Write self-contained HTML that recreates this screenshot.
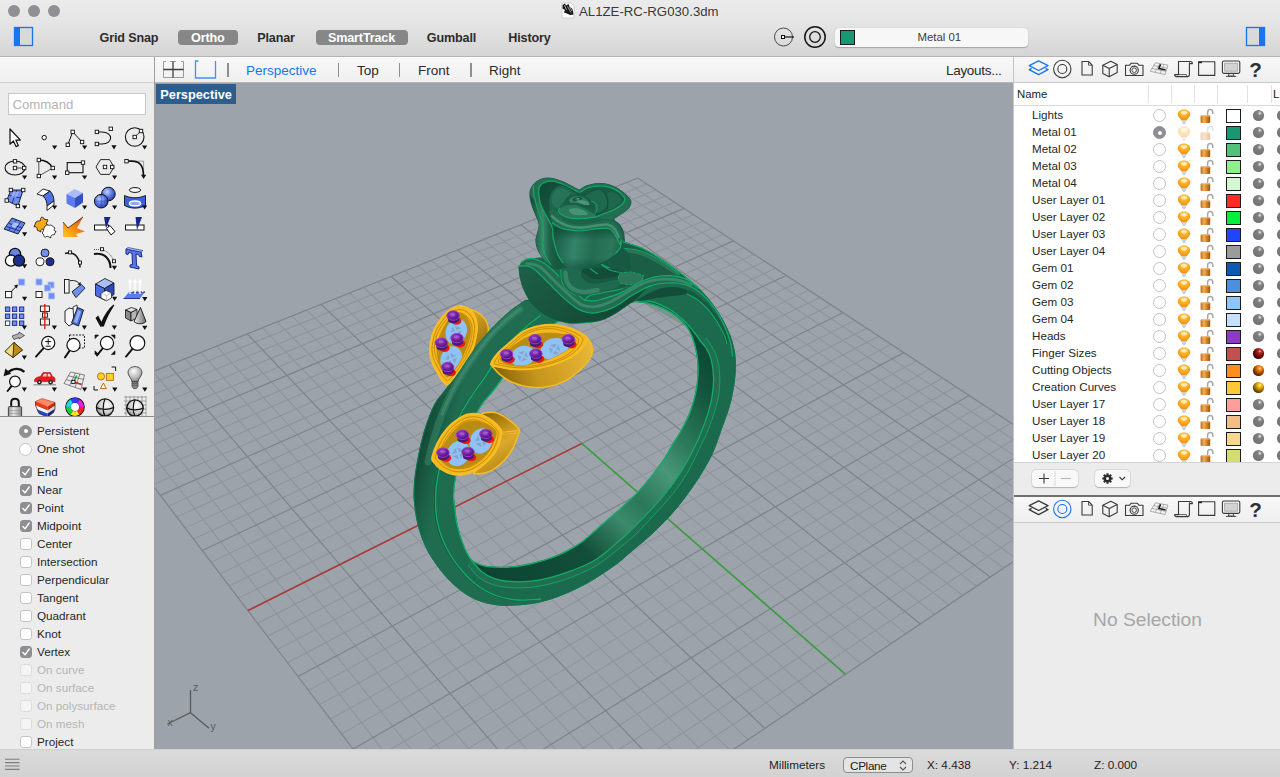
<!DOCTYPE html>
<html><head><meta charset="utf-8"><title>AL1ZE-RC-RG030.3dm</title>
<style>
*{box-sizing:border-box}
html,body{margin:0;padding:0}
body{width:1280px;height:777px;position:relative;overflow:hidden;background:#ececec;font-family:"Liberation Sans",sans-serif;color:#222;-webkit-font-smoothing:antialiased}
.abs{position:absolute}
#titlebar{position:absolute;left:0;top:0;width:1280px;height:57px;background:linear-gradient(#ebebeb 0,#e6e6e6 20px,#d5d5d5 56px);border-bottom:1px solid #b4b4b4}
.tl{position:absolute;top:5px;width:12px;height:12px;border-radius:50%;background:#8f8f94}
#title{position:absolute;left:579px;top:3.8px;font-size:13.2px;color:#3a3a3a;white-space:nowrap;letter-spacing:0.02px}
.tb{position:absolute;top:29.5px;height:16px;line-height:16px;font-size:12.6px;letter-spacing:-0.15px;font-weight:bold;color:#2c2c2c;white-space:nowrap;text-align:center}
.tb.on{background:#878787;color:#fff;border-radius:4px;top:29.5px;height:15.5px;line-height:16px}
#layerbox{position:absolute;left:835px;top:28px;width:193px;height:18.5px;background:#f7f7f7;border-radius:4px;box-shadow:0 0.5px 1px rgba(0,0,0,.25)}
#layerbox .sw{position:absolute;left:5px;top:2px;width:14.5px;height:14.5px;background:#199770;border:1px solid #1a1a1a}
#layerbox .tx{position:absolute;left:0;width:208.5px;top:3px;text-align:center;font-size:11.4px;color:#3c3c3c}
#left{position:absolute;left:0;top:57px;width:154px;height:692px;background:#ececec}
#lefttop{position:absolute;left:0;top:0;width:154px;height:26px;background:linear-gradient(#f8f8f8,#f0f0f0);border-bottom:1px solid #d0d0d0}
#cmd{position:absolute;left:8px;top:36px;width:138px;height:22px;background:#fff;border:1px solid #c6c6c6;font-size:13.2px;color:#b4b4b4;line-height:21px;padding-left:3.5px}
#vsep{position:absolute;left:154px;top:57px;width:1.5px;height:692px;background:#9e9e9e}
#tabs{position:absolute;left:155px;top:57px;width:858px;height:26px;background:linear-gradient(#f9f9f9,#efefef);border-bottom:1px solid #b8b8b8;font-size:13.5px}
#tabs span{position:absolute;top:6px;white-space:nowrap;color:#2a2a2a}
#tabs i{position:absolute;top:6px;width:1.5px;height:14px;background:#8e8e8e}
#vp{position:absolute;left:155px;top:83px;width:858px;height:666px;background:#9da3aa;overflow:hidden}
#vplabel{position:absolute;left:1px;top:1px;width:80px;height:20px;background:#2c5d8f;color:#fff;font-weight:bold;font-size:12.75px;line-height:21.4px;padding-left:4.3px}
#right{position:absolute;left:1013px;top:57px;width:267px;height:692px;background:#ececec;border-left:1px solid #c4c4c4}
.iconrow{position:absolute;left:0;width:267px;height:26px;background:linear-gradient(#f8f8f8,#eeeeee);border-bottom:1px solid #c9c9c9}
#lhead{position:absolute;left:0;top:26px;width:267px;height:23px;background:#fff;border-bottom:1px solid #d9d9d9;font-size:11.4px}
#lhead b{position:absolute;top:2px;width:1px;height:18px;background:#e1e1e1}
#llist{position:absolute;left:0;top:49px;width:267px;height:356px;background:#fff;overflow:hidden}
.lr{position:absolute;left:0;width:267px;height:17px;font-size:11.65px;line-height:17px;color:#262626}
.lr .nm{position:absolute;left:18px;top:-1px;white-space:nowrap}
.lr .rd{position:absolute;left:139px;top:2px;width:13px;height:13px;border-radius:50%;border:1px solid #c2c2c2;background:#fff}
.lr .rd.on{background:#8e8e93;border-color:#8e8e93}
.lr .rd.on:after{content:"";position:absolute;left:3.5px;top:3.5px;width:4px;height:4px;border-radius:50%;background:#fff}
.lr .sw{position:absolute;left:212px;top:1.5px;width:14.5px;height:14.5px;border:1.5px solid #1c1c1c}
#lfoot{position:absolute;left:0;top:405px;width:267px;height:33px;background:#ececec;border-top:1px solid #d4d4d4}
.btn{position:absolute;top:7px;height:17px;background:#f8f8f8;border-radius:4px;box-shadow:0 0 0 0.5px rgba(0,0,0,.12),0 0.5px 1px rgba(0,0,0,.2)}
#rdiv{position:absolute;left:0;top:438.2px;width:267px;height:1.6px;background:#707070}
#nosel{position:absolute;left:0;top:552px;width:267px;text-align:center;font-size:19.2px;color:#a6a6a6}
#status{position:absolute;left:0;top:749px;width:1280px;height:28px;background:linear-gradient(#dadada,#d2d2d2);border-top:1px solid #d0d0d0;font-size:11.75px;color:#222}
#status span{position:absolute;top:7.5px;white-space:nowrap}
#cplane{position:absolute;left:843px;top:6.5px;width:69.5px;height:16.5px;border:1px solid #8d8d8d;border-radius:4px;background:#e4e4e4}
.os{position:absolute;left:0;width:154px;height:18px;font-size:11.7px;line-height:18px;color:#262626}
.os .t{position:absolute;left:37px;top:0;white-space:nowrap}
.os.dis .t{color:#b5b5b5}
.os .cb{position:absolute;left:20px;top:3px;width:12px;height:12px;border-radius:3px;background:#fff;border:1px solid #c4c4c4}
.os.dis .cb{border-color:#dcdcdc;background:#f4f4f4}
.os .cb.on{background:#8e8e93;border-color:#8e8e93}
.os .rb{position:absolute;left:19px;top:2.5px;width:13px;height:13px;border-radius:50%;background:#fff;border:1px solid #c4c4c4}
.os .rb.on{background:#8e8e93;border-color:#8e8e93}
.os .rb.on:after{content:"";position:absolute;left:3.5px;top:3.5px;width:4px;height:4px;border-radius:50%;background:#fff}
#pdiv{position:absolute;left:0;top:359px;width:154px;height:1px;background:#8c8c8c}

</style></head><body>
<svg width="0" height="0" style="position:absolute"><defs>
<radialGradient id="ball0" cx="0.62" cy="0.3" r="0.75"><stop offset="0" stop-color="#ffffff"/><stop offset="0.12" stop-color="#b5b5b5"/><stop offset="0.3" stop-color="#7f7f7f"/><stop offset="1" stop-color="#707070"/></radialGradient>
<radialGradient id="ball1" cx="0.62" cy="0.3" r="0.75"><stop offset="0" stop-color="#ffd0c8"/><stop offset="0.15" stop-color="#c03a30"/><stop offset="0.5" stop-color="#7a0d0a"/><stop offset="1" stop-color="#2a0000"/></radialGradient>
<radialGradient id="ball2" cx="0.62" cy="0.3" r="0.75"><stop offset="0" stop-color="#fff0d0"/><stop offset="0.15" stop-color="#ff9a28"/><stop offset="0.55" stop-color="#b04c00"/><stop offset="1" stop-color="#3a1400"/></radialGradient>
<radialGradient id="ball3" cx="0.62" cy="0.3" r="0.75"><stop offset="0" stop-color="#fff8d8"/><stop offset="0.15" stop-color="#ffd028"/><stop offset="0.55" stop-color="#b07c00"/><stop offset="1" stop-color="#3a2600"/></radialGradient>
<radialGradient id="gBulb" cx="0.5" cy="0.3" r="0.7"><stop offset="0" stop-color="#ffe9a0"/><stop offset="0.35" stop-color="#ffb52e"/><stop offset="1" stop-color="#f08a0a"/></radialGradient>
<linearGradient id="gLock" x1="0" y1="0" x2="1" y2="0"><stop offset="0" stop-color="#b86a14"/><stop offset="0.35" stop-color="#f0b060"/><stop offset="0.6" stop-color="#d8892a"/><stop offset="1" stop-color="#9a5408"/></linearGradient>
<g id="bulb"><path d="M10 2.6C6.2 2.6 3.8 5 3.8 7.6C3.8 10.2 6.6 11.4 7.4 13.6H12.6C13.4 11.4 16.2 10.2 16.2 7.6C16.2 5 13.8 2.6 10 2.6Z" fill="url(#gBulb)"/><ellipse cx="10" cy="5.6" rx="3.4" ry="1.8" fill="#fff3c4" opacity="0.75"/><path d="M7.6 13.6H12.4L11.6 16.2H8.4Z" fill="#c4d4e8"/><path d="M8.6 16.2H11.4L10 17Z" fill="#8fa6c4"/></g>
<g id="lock"><path d="M11.6 8.2V5.4C11.6 3.4 13 2.6 14.3 2.6C15.6 2.6 16.8 3.5 16.8 5.4V7" fill="none" stroke="#a9a9a9" stroke-width="1.5"/><rect x="4.6" y="8.4" width="9.6" height="7.6" rx="1" fill="url(#gLock)"/><rect x="4.6" y="8.4" width="9.6" height="1.4" rx="0.7" fill="#e9a850" opacity="0.8"/></g>
<g id="docicon"><path d="M2 1H11L14 4V16H2Z" fill="#fbfbfb" stroke="#bdbdbd" stroke-width="0.6"/><path d="M2.5 3L5 1.5L6 3.5L8.5 2L9.5 4.5L12.5 7L13.5 12.5L10 13L7 11.5L4 10.5L5 8L2.5 6.5Z" fill="#161616"/><path d="M4.5 3L6.5 8M7.5 4.5L11 10.5M9.5 4.5L12 9" stroke="#fff" stroke-width="0.6"/></g>
<g id="gear"><path d="M16.02 7.36L17.69 7.43L17.69 9.57L16.02 9.64L15.80 10.18L16.93 11.41L15.41 12.93L14.18 11.80L13.64 12.02L13.57 13.69L11.43 13.69L11.36 12.02L10.82 11.80L9.59 12.93L8.07 11.41L9.20 10.18L8.98 9.64L7.31 9.57L7.31 7.43L8.98 7.36L9.20 6.82L8.07 5.59L9.59 4.07L10.82 5.20L11.36 4.98L11.43 3.31L13.57 3.31L13.64 4.98L14.18 5.20L15.41 4.07L16.93 5.59L15.80 6.82Z" fill="#2b2b2b"/><circle cx="12.5" cy="8.5" r="1.5" fill="#f8f8f8"/></g>
<g id="pi_layers" fill="none" stroke-width="1.3" stroke-linejoin="round"><path d="M24.6 3.9L34 8.7L24.6 13.5L15.2 8.7Z"/><path d="M17.6 11.4L15.2 12.6L24.6 17.6L34 12.6L31.6 11.4"/></g>
<g id="pi_circ" fill="none"><circle cx="48.3" cy="12" r="8.7" stroke-width="1.1"/><circle cx="48.3" cy="12" r="4.5" stroke-width="1.1"/></g>
<g id="picons" fill="none" stroke="#3a3a3a" stroke-width="1.1" stroke-linejoin="round">
<path d="M68 4.5H74.5L78.2 8.2V18H68Z"/><path d="M74.5 4.5V8.2H78.2" stroke-width="0.8"/>
<path d="M88.8 8.2L96.8 4.2L103.2 7.4V15.6L95.2 19.8L88.8 16.4Z"/><path d="M88.8 8.2L95.2 11.4L103.2 7.4M95.2 11.4V19.8"/>
<path d="M111.5 8.3H115.5L117 6.3H123.5L125 8.3H129V18.5H111.5Z"/><circle cx="120.2" cy="13.2" r="4.1"/><circle cx="120.2" cy="13.2" r="2.3" stroke-width="0.9"/>
<g stroke="#9a9a9a" stroke-width="0.8"><path d="M141.5 5.8L136.2 14.2M145.8 6.6L141 15.2M150 7.4L146 16.4M154 8.2L151 17.6M141.5 5.8L154 8.2M139.6 8.6L153 11.2M137.8 11.4L152 14.4M136.2 14.2L151 17.6"/></g>
<path d="M146.6 7.2L144.8 11.6L151.6 12.9" stroke="#1a1a1a" stroke-width="1.5"/>
<path d="M164.5 4.5H176.5C178 4.5 178.4 5.6 178.4 6.6H175.4V17.6C175.4 19 174.4 19.6 173.4 19.6H162.2C161 19.6 160.6 18.6 160.6 17.6H164.5Z"/><path d="M164.5 17.6H172.4C172.4 18.6 172.6 19.2 173.4 19.6M175.4 6.6C175.4 5.6 175.6 5 176.5 4.5" stroke-width="0.8"/>
<path d="M184.6 4.8H200.8V18.4H184.6Z"/><path d="M184.6 5.4H188" stroke-width="1.6" stroke="#222"/>
<rect x="208.4" y="4" width="17.4" height="12.4" rx="1.6"/><rect x="210.6" y="6.2" width="13" height="8" fill="#d4d4d4" stroke="#8a8a8a" stroke-width="0.6"/><path d="M215 16.6L214.4 19H219.8L219.2 16.6M212 19.4H222.2" stroke-width="0.9"/>
<text x="235.2" y="19.6" font-family="Liberation Sans,sans-serif" font-weight="bold" font-size="20.5" fill="#2e2e2e" stroke="none">?</text>
</g>

</defs></svg>
<div id="titlebar">
<span class="tl" style="left:8px"></span><span class="tl" style="left:28px"></span><span class="tl" style="left:48px"></span>
<svg class="abs" style="left:560px;top:2px" width="16" height="17"><use href="#docicon"/></svg>
<span id="title">AL1ZE-RC-RG030.3dm</span>
<svg class="abs" style="left:13px;top:26px" width="22" height="22"><rect x="1.5" y="1.5" width="18" height="18" fill="#d9d9d9" stroke="#1a73f0" stroke-width="1.3"/><rect x="1" y="1" width="6" height="19" fill="#1a73f0"/></svg>
<span class="tb" style="left:99px;width:60px">Grid Snap</span>
<span class="tb on" style="left:178px;width:59.5px">Ortho</span>
<span class="tb" style="left:256px;width:40px">Planar</span>
<span class="tb on" style="left:315.5px;width:92px">SmartTrack</span>
<span class="tb" style="left:426px;width:51px">Gumball</span>
<span class="tb" style="left:506px;width:47px">History</span>
<svg class="abs" style="left:770px;top:24px" width="60" height="26"><circle cx="13.5" cy="13" r="9" fill="none" stroke="#3a3a3a" stroke-width="0.9"/><rect x="11.5" y="11.5" width="3" height="3" fill="#fff" stroke="#111" stroke-width="1"/><path d="M15 13H24" stroke="#111" stroke-width="1.2"/><circle cx="45" cy="13" r="10.2" fill="none" stroke="#161616" stroke-width="1.5"/><circle cx="45" cy="13" r="5.3" fill="none" stroke="#161616" stroke-width="1.3"/></svg>
<div id="layerbox"><span class="sw"></span><span class="tx">Metal 01</span></div>
<svg class="abs" style="left:1245px;top:26px" width="22" height="22"><rect x="1.5" y="1.5" width="18" height="18" fill="#d9d9d9" stroke="#1a73f0" stroke-width="1.3"/><rect x="14" y="1" width="6" height="19" fill="#1a73f0"/></svg>
</div>
<div id="left">
<div id="lefttop"></div>
<div id="cmd">Command</div>
<svg class="abs" style="left:0;top:63px" width="154" height="296" viewBox="0 120 154 296">
<g transform="translate(15,138)"><path d="M-5 -9V6.2L-1.6 3L1 8.6L3.3 7.6L0.8 2.1H5.4Z" fill="#fff" stroke="#111" stroke-width="1.2" stroke-linejoin="round"/></g>
<g transform="translate(45,138)"><circle cx="-0.8" cy="-0.4" r="2.2" fill="#fff" stroke="#111" stroke-width="1"/><path d="M7.0 7.4H12.2L9.6 11.6Z" fill="#111"/></g>
<g transform="translate(75,138)"><path d="M-7.2 6.8L-2.3 -6.1L7.1 4" fill="none" stroke="#111" stroke-width="1"/><rect x="-8.9" y="5.1" width="3.4" height="3.4" fill="#fff" stroke="#111" stroke-width="0.9"/><rect x="-4.0" y="-7.8" width="3.4" height="3.4" fill="#fff" stroke="#111" stroke-width="0.9"/><rect x="5.4" y="2.3" width="3.4" height="3.4" fill="#fff" stroke="#111" stroke-width="0.9"/><path d="M7.0 7.4H12.2L9.6 11.6Z" fill="#111"/></g>
<g transform="translate(105,138)"><path d="M-8 -6H-3C8.5 -6 8.5 6 -3 6H-8" fill="none" stroke="#111" stroke-width="1.1"/><rect x="-9.8" y="-7.8" width="3.4" height="3.4" fill="#fff" stroke="#111" stroke-width="0.9"/><rect x="4.1" y="-10.9" width="3.4" height="3.4" fill="#fff" stroke="#111" stroke-width="0.9"/><rect x="-9.8" y="4.3" width="3.4" height="3.4" fill="#fff" stroke="#111" stroke-width="0.9"/><path d="M6.4 7.2H11.6L9.0 11.4Z" fill="#111"/></g>
<g transform="translate(135,138)"><circle cx="-0.3" cy="-1" r="9.3" fill="none" stroke="#111" stroke-width="1.1"/><path d="M-0.3 -1L6 -7" stroke="#111" stroke-width="0.8"/><rect x="-2.0" y="-2.7" width="3.4" height="3.4" fill="#fff" stroke="#111" stroke-width="0.9"/><rect x="4.3" y="-8.7" width="3.4" height="3.4" fill="#fff" stroke="#111" stroke-width="0.9"/><path d="M7.0 7.4H12.2L9.6 11.6Z" fill="#111"/></g>
<g transform="translate(15,168)"><ellipse cx="0" cy="0" rx="10" ry="7" fill="none" stroke="#111" stroke-width="1.1"/><path d="M0 0H9" stroke="#111" stroke-width="0.8"/><rect x="-1.7" y="-8.4" width="3.4" height="3.4" fill="#fff" stroke="#111" stroke-width="0.9"/><rect x="-1.7" y="-1.7" width="3.4" height="3.4" fill="#fff" stroke="#111" stroke-width="0.9"/><rect x="7.5" y="-1.7" width="3.4" height="3.4" fill="#fff" stroke="#111" stroke-width="0.9"/><path d="M7.0 7.4H12.2L9.6 11.6Z" fill="#111"/></g>
<g transform="translate(45,168)"><path d="M-6.2 -8V8L7.7 0" fill="none" stroke="#111" stroke-width="0.7"/><path d="M-6.2 -8C0 -8 5 -5 7.7 0" fill="none" stroke="#111" stroke-width="1.3"/><rect x="-7.9" y="-9.7" width="3.4" height="3.4" fill="#fff" stroke="#111" stroke-width="0.9"/><rect x="6.0" y="-1.7" width="3.4" height="3.4" fill="#fff" stroke="#111" stroke-width="0.9"/><rect x="-7.9" y="6.3" width="3.4" height="3.4" fill="#fff" stroke="#111" stroke-width="0.9"/><path d="M7.0 7.4H12.2L9.6 11.6Z" fill="#111"/></g>
<g transform="translate(75,168)"><rect x="-7.8" y="-5.4" width="15.8" height="10.1" fill="none" stroke="#111" stroke-width="1.1"/><rect x="-9.5" y="3.0" width="3.4" height="3.4" fill="#fff" stroke="#111" stroke-width="0.9"/><rect x="6.3" y="-7.1" width="3.4" height="3.4" fill="#fff" stroke="#111" stroke-width="0.9"/><path d="M7.0 7.4H12.2L9.6 11.6Z" fill="#111"/></g>
<g transform="translate(105,168)"><path d="M-9 -1L-4.5 -8.4H4.5L9 -1L4.5 6.4H-4.5Z" fill="none" stroke="#111" stroke-width="0.9"/><rect x="-1.7" y="-2.7" width="3.4" height="3.4" fill="#fff" stroke="#111" stroke-width="0.9"/><rect x="5.5" y="-2.7" width="3.4" height="3.4" fill="#fff" stroke="#111" stroke-width="0.9"/><path d="M7.0 7.4H12.2L9.6 11.6Z" fill="#111"/></g>
<g transform="translate(135,168)"><path d="M0 -6.8H8.6V1" fill="none" stroke="#666" stroke-width="0.6"/><path d="M-8.5 -6.8H-3C5 -6.8 8.4 -2 8.4 7" fill="none" stroke="#111" stroke-width="1.7"/><rect x="-10.2" y="-8.5" width="3.4" height="3.4" fill="#fff" stroke="#111" stroke-width="0.9"/><path d="M6.0 6.8H11.2L8.6 11.0Z" fill="#111"/></g>
<g transform="translate(15,198)"><path d="M-4.1 -8L8.2 -8L2.9 8L-8.3 2.5Z" fill="#6f8df0" stroke="#111" stroke-width="0.9"/><path d="M1.8 -8L-2.8 5.2M-6.2 -2.6L5.6 0" stroke="#1c2f8c" stroke-width="1"/><path d="M-2 -6L4 -6L1 0L-4 -1Z" fill="#a8bcf8" opacity="0.7"/><rect x="-5.8" y="-9.7" width="3.4" height="3.4" fill="#fff" stroke="#111" stroke-width="0.9"/><rect x="6.5" y="-9.7" width="3.4" height="3.4" fill="#fff" stroke="#111" stroke-width="0.9"/><rect x="1.2" y="6.3" width="3.4" height="3.4" fill="#fff" stroke="#111" stroke-width="0.9"/><rect x="-10.0" y="0.8" width="3.4" height="3.4" fill="#fff" stroke="#111" stroke-width="0.9"/><path d="M7.0 7.4H12.2L9.6 11.6Z" fill="#111"/></g>
<g transform="translate(45,198)"><path d="M-8 -4L-2 -9L5 -7L-2 -2Z" fill="#fff" stroke="#111" stroke-width="0.9"/><path d="M-2 -2L5 -7C8 -4 9 0 9 3L2 8C2 4 1 1 -2 -2Z" fill="#4f70e6" stroke="#111" stroke-width="0.9"/><path d="M2 8L9 3V7L2 12.5Z" fill="#fff" stroke="#111" stroke-width="0.9"/><path d="M7.0 7.4H12.2L9.6 11.6Z" fill="#111"/></g>
<g transform="translate(75,198)"><path d="M-8.5 -4L-0.5 -9L8 -5L0 0Z" fill="#a9bdfa"/><path d="M-8.5 -4L0 0V10L-8.5 5.5Z" fill="#5b7cec"/><path d="M0 0L8 -5V4.5L0 10Z" fill="#3450c4"/><path d="M7.0 7.4H12.2L9.6 11.6Z" fill="#111"/></g>
<g transform="translate(105,198)"><defs><radialGradient id="sphg" cx="0.4" cy="0.35" r="0.7"><stop offset="0" stop-color="#c8d6ff"/><stop offset="0.5" stop-color="#5a7be8"/><stop offset="1" stop-color="#2238a8"/></radialGradient></defs><circle cx="3.4" cy="-4" r="6.8" fill="url(#sphg)" stroke="#111" stroke-width="1"/><circle cx="-3.8" cy="3.2" r="6.8" fill="url(#sphg)" stroke="#111" stroke-width="1"/><path d="M-3.8 -3.6V10M-10.6 3.2H3" stroke="#1c2f8c" stroke-width="0.7" opacity="0.7"/><path d="M7.0 7.4H12.2L9.6 11.6Z" fill="#111"/></g>
<g transform="translate(135,198)"><ellipse cx="0" cy="-8" rx="5.6" ry="2.4" fill="#fff" stroke="#111" stroke-width="1"/><path d="M-10.5 -2.5C-4 0.5 4 0.5 10.5 -2.5V7.5C4 11 -4 11 -10.5 7.5Z" fill="#3f60dc" stroke="#111" stroke-width="0.9"/><ellipse cx="0" cy="5.4" rx="5.6" ry="2.4" fill="#8fa8f6" stroke="#fff" stroke-width="1.4"/><path d="M7.0 7.4H12.2L9.6 11.6Z" fill="#111"/></g>
<g transform="translate(15,228)"><path d="M-3 -10L10 -5L3 6L-11 1Z" fill="#6485ee" stroke="#111" stroke-width="0.9"/><path d="M1.5 -8.2L-6.5 2.5M6 -6.5L-1.5 4.5M-6 -4.5L7.5 0M-8.5 -1.5L5 3" stroke="#1c2f8c" stroke-width="0.9"/><path d="M-1 -6L4 -4L0 0L-4 -2Z" fill="#c6d3ff" opacity="0.8"/><path d="M7.0 4.2H12.2L9.6 8.4Z" fill="#111"/></g>
<g transform="translate(45,228)"><path d="M-9 -6C-7 -8 -5 -6 -4 -8C-6 -11 -1 -12 -1 -9C0 -8 2 -9 3 -8L1 -4C3 -4 4 -1 1 -1L-1 2C-3 0 -5 2 -4 4L-8 2C-7 0 -9 -2 -11 -1Z" fill="#f7a81c" stroke="#111" stroke-width="0.8"/><path d="M0 -2C2 -4 4 -2 6 -3L10 0C8 2 10 4 11 3L9 7C7 6 5 8 6 10L2 8C1 10 -2 9 -1 7L-3 5C-1 4 -2 1 0 -2Z" fill="#fff" stroke="#111" stroke-width="0.8"/></g>
<g transform="translate(75,228)"><defs><linearGradient id="expl" x1="0" y1="1" x2="1" y2="0"><stop offset="0" stop-color="#ffc820"/><stop offset="0.6" stop-color="#f47a10"/><stop offset="1" stop-color="#d83a08"/></linearGradient></defs><path d="M-12 9V-6L-7 0L8 -11L2 0L10 3.5L1 6L3 9Z" fill="url(#expl)"/><path d="M-12 -6L-7 0L8 -11" fill="none" stroke="#3a1a08" stroke-width="0.8"/></g>
<g transform="translate(105,228)"><rect x="-10.5" y="-3" width="14" height="5" fill="#fff" stroke="#111" stroke-width="1"/><path d="M-1 -11H5.5L1 0.5Z" fill="#16268c"/><path d="M1.5 0.5L5 -2.5L10 3.5L6 7Z" fill="#fff" stroke="#111" stroke-width="1"/></g>
<g transform="translate(135,228)"><rect x="-9.5" y="-3" width="18.5" height="5" fill="#fff" stroke="#111" stroke-width="1"/><path d="M0.5 -11H7L2 2Z" fill="#16268c"/></g>
<g transform="translate(15,259)"><circle cx="0" cy="-5" r="5.6" fill="#6485ee" stroke="#111" stroke-width="1.3"/><circle cx="-4" cy="1.6" r="5.6" fill="#fff" stroke="#111" stroke-width="1.3"/><circle cx="4" cy="1.6" r="5.6" fill="#1c2f8c" stroke="#111" stroke-width="1.3"/><path d="M7.0 5.2H12.2L9.6 9.4Z" fill="#111"/></g>
<g transform="translate(45,259)"><circle cx="0" cy="-6" r="4" fill="#6f8ff2" stroke="#111" stroke-width="0.9"/><circle cx="-5" cy="2.8" r="4" fill="#fff" stroke="#111" stroke-width="0.9"/><circle cx="5" cy="2.8" r="4" fill="#1c2f8c" stroke="#111" stroke-width="0.9"/></g>
<g transform="translate(75,259)"><path d="M-10 -5.5C0 -9 5 0 5 8.5" fill="none" stroke="#111" stroke-width="1.5"/><rect x="-6.5" y="-8.1" width="3" height="3" fill="#fff" stroke="#111" stroke-width="0.9"/><rect x="3.5" y="2.1" width="3" height="3" fill="#fff" stroke="#111" stroke-width="0.9"/></g>
<g transform="translate(105,259)"><path d="M-11 -5C0 -7 5.5 1 5.5 9" fill="none" stroke="#111" stroke-width="2"/><path d="M-11 -9.5H-4C3 -8 7 -3 9 2" fill="none" stroke="#111" stroke-width="0.7" stroke-dasharray="1 1"/><rect x="-4.5" y="-11.3" width="3" height="3" fill="#fff" stroke="#111" stroke-width="0.9"/><rect x="7.5" y="0.7" width="3" height="3" fill="#fff" stroke="#111" stroke-width="0.9"/><path d="M6.8 6.8H12.0L9.4 11.0Z" fill="#111"/></g>
<g transform="translate(135,259)"><path d="M-9 -10L6 -7L7 -2L4.5 -2.5L3.5 -4.5L1 -5L1.5 6.5L4 8L4 10L-5 8L-5 6L-2.5 5.5L-3 -6L-6 -6.5L-7 -4.5L-9 -5Z" fill="#5878ea" stroke="#16268c" stroke-width="1"/><path d="M-9 -10L-7 -11.5L8 -8.5L6 -7Z" fill="#a9bdfa" stroke="#16268c" stroke-width="0.6"/></g>
<g transform="translate(15,289)"><path d="M-5 4L2 -3.5" stroke="#111" stroke-width="1"/><path d="M2.8 -4.4L-1 -3.6L2 -0.6Z" fill="#111"/><rect x="-9.5" y="2.5" width="6.2" height="6.2" fill="#fff" stroke="#111" stroke-width="0.9"/><rect x="3.5" y="-10" width="6.2" height="6.2" fill="#6f8ff2" stroke="#a9bdfa" stroke-width="0.9"/><path d="M7.0 7.8H12.2L9.6 12.0Z" fill="#111"/></g>
<g transform="translate(45,289)"><rect x="-9" y="-10" width="6" height="6" fill="#6f8ff2" stroke="#a9bdfa" stroke-width="0.8"/><rect x="3" y="-7" width="6" height="6" fill="#6f8ff2" stroke="#a9bdfa" stroke-width="0.8"/><rect x="-0.5" y="-4" width="6" height="6" fill="#6f8ff2" stroke="#a9bdfa" stroke-width="0.8"/><rect x="3.5" y="4" width="6" height="6" fill="#6f8ff2" stroke="#a9bdfa" stroke-width="0.8"/><rect x="-9" y="2.5" width="6" height="6" fill="#fff" stroke="#111" stroke-width="0.9"/></g>
<g transform="translate(75,289)"><rect x="-10.5" y="-9.5" width="4.6" height="13.6" fill="#f4f4f4" stroke="#111" stroke-width="0.9"/><path d="M-3 2.8L6.2 -4.6L10 -0.8L1 8.6Z" fill="#6f8ff2" stroke="#111" stroke-width="0.9"/><path d="M-5 -8.4C0 -9 3 -7.5 5 -4.8" fill="none" stroke="#111" stroke-width="0.9"/><path d="M5.8 -3.4L2.4 -4.8L5.6 -7Z" fill="#111"/></g>
<g transform="translate(105,289)"><path d="M-9.5 -5L0 -10.5L9 -6L-0.5 -0.5Z" fill="#a9bdfa" stroke="#111" stroke-width="0.8"/><path d="M-9.5 -5L-0.5 -0.5V11L-9.5 6.5Z" fill="#4a6ce2" stroke="#111" stroke-width="0.8"/><path d="M-0.5 -0.5L9 -6V5.5L-0.5 11Z" fill="#2e48b8" stroke="#111" stroke-width="0.8"/><path d="M-4 4L1 1.5L6.5 3.8V9L1.5 11.8L-4 9Z" fill="#fff" stroke="#111" stroke-width="0.7"/><path d="M-4 4L1.5 6.5L6.5 3.8M1.5 6.5V11.8" stroke="#888" stroke-width="0.5" fill="none"/><path d="M7.0 7.8H12.2L9.6 12.0Z" fill="#111"/></g>
<g transform="translate(135,289)"><path d="M-6 3L10 3L5 9.5H-11.5Z" fill="#5b7cec"/><path d="M-11.5 9.5H5" stroke="#16268c" stroke-width="0.9"/><path d="M-6 3H10" stroke="#111" stroke-width="0.9" stroke-dasharray="2.2 1.4"/><g fill="#fff" stroke="#fff" stroke-width="1.4"><path d="M-5 5V-7M0 5V-7M5 5V-7"/><path d="M-7 -6.5L-5 -10L-3 -6.5ZM-2 -6.5L0 -10L2 -6.5ZM3 -6.5L5 -10L7 -6.5Z" stroke-width="0.4"/></g><path d="M7.2 8.0H12.4L9.8 12.2Z" fill="#111"/></g>
<g transform="translate(15,318)"><rect x="-9.6" y="-11.0" width="4.4" height="4.4" fill="#6f8ff2" stroke="#16268c" stroke-width="0.9"/><rect x="-2.6" y="-11.0" width="4.4" height="4.4" fill="#6f8ff2" stroke="#16268c" stroke-width="0.9"/><rect x="4.4" y="-11.0" width="4.4" height="4.4" fill="#6f8ff2" stroke="#16268c" stroke-width="0.9"/><rect x="-9.6" y="-4.0" width="4.4" height="4.4" fill="#6f8ff2" stroke="#16268c" stroke-width="0.9"/><rect x="-2.6" y="-4.0" width="4.4" height="4.4" fill="#6f8ff2" stroke="#16268c" stroke-width="0.9"/><rect x="4.4" y="-4.0" width="4.4" height="4.4" fill="#6f8ff2" stroke="#16268c" stroke-width="0.9"/><rect x="-9.6" y="3.0" width="4.4" height="4.4" fill="#fff" stroke="#16268c" stroke-width="0.9"/><rect x="-2.6" y="3.0" width="4.4" height="4.4" fill="#6f8ff2" stroke="#16268c" stroke-width="0.9"/><rect x="4.4" y="3.0" width="4.4" height="4.4" fill="#6f8ff2" stroke="#16268c" stroke-width="0.9"/><path d="M6.8 7.6H12.0L9.4 11.8Z" fill="#111"/></g>
<g transform="translate(45,318)"><rect x="-4.6" y="-12" width="9" height="5.4" fill="#f2f2f2" stroke="#111" stroke-width="0.9"/><rect x="-2.6" y="-5" width="5" height="4.2" fill="#f2f2f2" stroke="#111" stroke-width="0.9"/><rect x="-4.6" y="1" width="9" height="6" fill="#f2f2f2" stroke="#111" stroke-width="0.9"/><path d="M-0.2 -14V11" stroke="#e02020" stroke-width="1.4"/><path d="M6.8 7.6H12.0L9.4 11.8Z" fill="#111"/></g>
<g transform="translate(75,318)"><path d="M-10 -7L-6 -10L-1 -9V5L-6 8L-10 4Z" fill="#f6f6f6" stroke="#111" stroke-width="0.9"/><path d="M-2 -11L2 -13L3 2L-1 5Z" fill="#f6f6f6" stroke="#111" stroke-width="0.8"/><path d="M2.5 -10.5L8.5 -8L3.5 8L-3.5 5Z" fill="#4a6ce2" stroke="#111" stroke-width="0.9"/><path d="M3 -8L6 -6.5L2 5L-1 4Z" fill="#a9bdfa" opacity="0.8"/><path d="M6.8 7.6H12.0L9.4 11.8Z" fill="#111"/></g>
<g transform="translate(105,318)"><path d="M-9.5 0L-6.8 -2.4L-3.6 3.8C-0.5 -3.5 3.5 -9.5 8.6 -13.5L9.4 -12.8C5.5 -7 1.5 0.5 -1.2 8.6L-4.6 8.8Z" fill="#111"/><path d="M6.8 7.6H12.0L9.4 11.8Z" fill="#111"/></g>
<g transform="translate(135,318)"><path d="M-9.5 -8L-3.5 -10.5L2 -8.5L-4 -5.5Z" fill="#e6e6e6" stroke="#111" stroke-width="0.8"/><path d="M-9.5 -8L-4 -5.5V3L-9.5 0Z" fill="#8a8a8a" stroke="#111" stroke-width="0.8"/><path d="M-4 -5.5L2 -8.5V0L-4 3Z" fill="#b8b8b8" stroke="#111" stroke-width="0.8"/><defs><linearGradient id="cone" x1="0" x2="1"><stop offset="0" stop-color="#f4f4f4"/><stop offset="1" stop-color="#6a6a6a"/></linearGradient></defs><path d="M5.5 -10.5L11 3.5C8 6.5 2 6.5 -1 3.5Z" fill="url(#cone)" stroke="#111" stroke-width="0.9"/><path d="M7.2 7.8H12.4L9.8 12.0Z" fill="#111"/></g>
<g transform="translate(15,348)"><path d="M-3 -12L4 -14.5V-16L9.5 -12.5L4 -9V-10.5L-1 -8.5Z" fill="#b0b0b0" stroke="#333" stroke-width="0.7"/><path d="M-10 3.5L-1 -5.5L7.5 2L-2 9.5Z" fill="#e8b840" stroke="#111" stroke-width="0.8"/><path d="M-10 3.5L-1 -5.5L-2 9.5Z" fill="#f4d878" stroke="#111" stroke-width="0.6"/><path d="M-1 -5.5L7.5 2L-2 9.5Z" fill="#c08a18" stroke="#111" stroke-width="0.6"/><path d="M6.8 7.6H12.0L9.4 11.8Z" fill="#111"/></g>
<g transform="translate(45,348)"><path d="M-1.2 -0.1L-9.0 8.6" stroke="#111" stroke-width="1.9" stroke-linecap="round"/><circle cx="3.2" cy="-5" r="6.6" fill="#fff" stroke="#111" stroke-width="1.2"/><path d="M0.2 -6.4H6.2M3.2 -9.4V-3.4M0.6 -1.8H5.8" stroke="#111" stroke-width="1"/></g>
<g transform="translate(75,348)"><rect x="-5.5" y="-13" width="15" height="13" fill="none" stroke="#111" stroke-width="1" stroke-dasharray="1.8 1.4"/><path d="M-5.2 2.4L-10.0 9.4" stroke="#111" stroke-width="1.9" stroke-linecap="round"/><circle cx="-1.5" cy="-3" r="6.6" fill="#fff" stroke="#111" stroke-width="1.2"/></g>
<g transform="translate(105,348)"><path d="M-2.1 0.1L-8.0 7.4" stroke="#111" stroke-width="1.9" stroke-linecap="round"/><circle cx="2" cy="-5" r="6.6" fill="#fff" stroke="#111" stroke-width="1.2"/><path d="M-10 -13H-6.4L-10 -9.4ZM10 -13H6.4L10 -9.4ZM10 6.4V2.8L6.4 6.4ZM-10 6.4V2.8L-6.4 6.4Z" fill="#111" stroke="#111" stroke-width="0.6"/></g>
<g transform="translate(135,348)"><path d="M-2.4 0.7L-9.0 8.6" stroke="#111" stroke-width="1.9" stroke-linecap="round"/><circle cx="2.4" cy="-5" r="7.4" fill="#fff" stroke="#111" stroke-width="1.2"/></g>
<g transform="translate(15,379)"><path d="M-3.3 6.8L-7.4 12.0" stroke="#111" stroke-width="1.9" stroke-linecap="round"/><circle cx="0" cy="2.6" r="5.4" fill="#fff" stroke="#111" stroke-width="1.2"/><path d="M-8 -5.6C-2 -11.5 5 -11 9.4 -7.2" fill="none" stroke="#111" stroke-width="2.3"/><path d="M-11.4 -2.8L-9.6 -10.4L-3.8 -5.2Z" fill="#111"/><path d="M6.8 8.6H12.0L9.4 12.8Z" fill="#111"/></g>
<g transform="translate(45,379)"><path d="M-11.5 5.8H11" stroke="#555" stroke-width="0.7"/><path d="M-10.5 2.6C-10.8 -1 -8 -1.8 -4.6 -2.4L-2 -6.4H5.4L7.4 -2.6C9.6 -2.2 10.4 -0.4 10 2.6Z" fill="#e81820" stroke="#a00c10" stroke-width="0.6"/><path d="M-1 -5.2H1.6V-2.6H-2.6ZM2.8 -5.2H4.8L6 -2.6H2.8Z" fill="#ffd0d0"/><circle cx="-5.6" cy="3.2" r="2.3" fill="#222"/><circle cx="5.6" cy="3.2" r="2.3" fill="#222"/><circle cx="-5.6" cy="3.2" r="0.9" fill="#ddd"/><circle cx="5.6" cy="3.2" r="0.9" fill="#ddd"/><path d="M6.8 8.6H12.0L9.4 12.8Z" fill="#111"/></g>
<g transform="translate(75,379)"><g stroke="#555" stroke-width="0.7" fill="none"><path d="M-4.5 -7L-11 4.5M0.5 -6L-5.5 6.5M5 -5L0 8.5M9.5 -4L6 10.5M-4.5 -7L9.5 -4M-6.6 -3.2L8.4 0.4M-8.8 0.6L7.2 5.2M-11 4.5L6 10.5"/></g><path d="M-1.5 3L6.5 5.4" stroke="#e02020" stroke-width="1.6"/><path d="M-1.5 3L1.8 -3.4" stroke="#20a030" stroke-width="1.6"/><rect x="-3.2" y="1.4" width="3.2" height="3.2" fill="#fff" stroke="#111" stroke-width="0.9"/><path d="M7.0 8.6H12.2L9.6 12.8Z" fill="#111"/></g>
<g transform="translate(105,379)"><circle cx="-4" cy="-2.6" r="3.6" fill="#ffd028" stroke="#b86a10" stroke-width="0.9"/><rect x="1.4" y="-5.6" width="7" height="7" fill="#ffd028" stroke="#b86a10" stroke-width="0.9"/><path d="M-1.6 4L1.4 9.6H-4.6Z" fill="#fff" stroke="#b86a10" stroke-width="1"/><path d="M6.6 -12H10.6V-8M-11 7V11H-7" fill="none" stroke="#111" stroke-width="1"/><path d="M7.2 8.6H12.4L9.8 12.8Z" fill="#111"/></g>
<g transform="translate(135,379)"><defs><radialGradient id="gbulb2" cx="0.4" cy="0.3" r="0.8"><stop offset="0" stop-color="#fdfdfd"/><stop offset="0.6" stop-color="#b5b5b5"/><stop offset="1" stop-color="#6a6a6a"/></radialGradient></defs><path d="M0 -12.4C-4.6 -12.4 -7 -9.4 -7 -6.4C-7 -3 -3.6 -1.4 -3 2.8H3C3.6 -1.4 7 -3 7 -6.4C7 -9.4 4.6 -12.4 0 -12.4Z" fill="url(#gbulb2)" stroke="#333" stroke-width="0.8"/><path d="M-3 2.8H3V7.4L1.4 9.6H-1.4L-3 7.4Z" fill="#8a8a8a" stroke="#333" stroke-width="0.7"/><path d="M-3 4.6H3M-3 6.4H3" stroke="#444" stroke-width="0.6"/><path d="M7.2 8.6H12.4L9.8 12.8Z" fill="#111"/></g>
<g transform="translate(15,408)"><path d="M-3.8 -1V-5.6C-3.8 -10.6 3.8 -10.6 3.8 -5.6V-1" fill="none" stroke="#111" stroke-width="2"/><defs><linearGradient id="plk" x1="0" x2="1"><stop offset="0" stop-color="#9a9a9a"/><stop offset="0.4" stop-color="#e8e8e8"/><stop offset="1" stop-color="#8a8a8a"/></linearGradient></defs><rect x="-6.6" y="-1.4" width="13.2" height="11" rx="1" fill="url(#plk)" stroke="#333" stroke-width="0.9"/><path d="M-6 2.6H6M-6 5.4H6" stroke="#888" stroke-width="0.6"/></g>
<g transform="translate(45,408)"><path d="M-9.5 -6.5L-3 -9.5L10 -5.5L2.5 -1Z" fill="#ff8a68" stroke="#c03010" stroke-width="0.6"/><path d="M-9.5 -6.5L2.5 -1V2.4L-9.5 -2.6Z" fill="#e83a18"/><path d="M2.5 -1L10 -5.5V-2.2L2.5 2.4Z" fill="#c02808"/><path d="M-9.5 -2.6L2.5 2.4V5.4L-8.5 1Z" fill="#fff"/><path d="M2.5 2.4L10 -2.2V0.8L2.5 5.4Z" fill="#d8d8d8"/><path d="M-8.5 1L2.5 5.4V9L-6 5.5Z" fill="#2848c8"/><path d="M2.5 5.4L10 0.8L8.5 4.5L2.5 9Z" fill="#16268c"/><path d="M-9.5 -6.5V-2.6L-6 5.5L2.5 9L8.5 4.5L10 0.8V-5.5" fill="none" stroke="#222" stroke-width="0.7"/></g>
<g transform="translate(75,408)"><circle cx="0" cy="-1" r="6.6" fill="none" stroke="#111" stroke-width="6.4"/><g fill="none" stroke-width="4.6"><circle cx="0" cy="-1" r="6.6" stroke="#ff2020" stroke-dasharray="7 34.5" stroke-dashoffset="0"/><circle cx="0" cy="-1" r="6.6" stroke="#ffe020" stroke-dasharray="7 34.5" stroke-dashoffset="-6.9"/><circle cx="0" cy="-1" r="6.6" stroke="#20d030" stroke-dasharray="7 34.5" stroke-dashoffset="-13.8"/><circle cx="0" cy="-1" r="6.6" stroke="#20d8e8" stroke-dasharray="7 34.5" stroke-dashoffset="-20.7"/><circle cx="0" cy="-1" r="6.6" stroke="#3040f0" stroke-dasharray="7 34.5" stroke-dashoffset="-27.6"/><circle cx="0" cy="-1" r="6.6" stroke="#e020e0" stroke-dasharray="7 34.5" stroke-dashoffset="-34.5"/></g><circle cx="0" cy="-1" r="4" fill="#fff"/></g>
<g transform="translate(105,408)"><defs><radialGradient id="gsph" cx="0.6" cy="0.35" r="0.7"><stop offset="0" stop-color="#fff"/><stop offset="0.6" stop-color="#d0d0d0"/><stop offset="1" stop-color="#8a8a8a"/></radialGradient></defs><circle cx="0" cy="-0.5" r="8.6" fill="url(#gsph)" stroke="#111" stroke-width="1.3"/><path d="M-8.6 -0.5C-4 2 4 2 8.6 -0.5M0 -9.1C-2.4 -4 -2.4 4 0 8.1" fill="none" stroke="#111" stroke-width="1.2"/></g>
<g transform="translate(135,408)"><g stroke="#777" stroke-width="0.6"><path d="M-11 -11H11M-11 -7H11M-11 -3H11M-11 1H11M-11 5H11M-9 -12V8M-5 -12V8M-1 -12V8M3 -12V8M7 -12V8M11 -12V8"/></g><circle cx="0" cy="0" r="8.2" fill="url(#gsph)" stroke="#111" stroke-width="1.3"/><path d="M-8.2 0C-4 2.4 4 2.4 8.2 0M0 -8.2C-2.4 -4 -2.4 4 0 8.2" fill="none" stroke="#111" stroke-width="1.2"/></g>
</svg>
<div id="pdiv"></div>
<div class="os" style="top:365px"><span class="rb on"></span><span class="t">Persistent</span></div>
<div class="os" style="top:383px"><span class="rb"></span><span class="t">One shot</span></div>
<div class="os" style="top:406px"><span class="cb on"><svg class="abs" style="left:-1px;top:-1px" width="12" height="12"><path d="M2.8 6.4L5 8.8L9.2 3" stroke="#fff" stroke-width="1.4" fill="none" stroke-linecap="round" stroke-linejoin="round"/></svg></span><span class="t">End</span></div>
<div class="os" style="top:424px"><span class="cb on"><svg class="abs" style="left:-1px;top:-1px" width="12" height="12"><path d="M2.8 6.4L5 8.8L9.2 3" stroke="#fff" stroke-width="1.4" fill="none" stroke-linecap="round" stroke-linejoin="round"/></svg></span><span class="t">Near</span></div>
<div class="os" style="top:442px"><span class="cb on"><svg class="abs" style="left:-1px;top:-1px" width="12" height="12"><path d="M2.8 6.4L5 8.8L9.2 3" stroke="#fff" stroke-width="1.4" fill="none" stroke-linecap="round" stroke-linejoin="round"/></svg></span><span class="t">Point</span></div>
<div class="os" style="top:460px"><span class="cb on"><svg class="abs" style="left:-1px;top:-1px" width="12" height="12"><path d="M2.8 6.4L5 8.8L9.2 3" stroke="#fff" stroke-width="1.4" fill="none" stroke-linecap="round" stroke-linejoin="round"/></svg></span><span class="t">Midpoint</span></div>
<div class="os" style="top:478px"><span class="cb"></span><span class="t">Center</span></div>
<div class="os" style="top:496px"><span class="cb"></span><span class="t">Intersection</span></div>
<div class="os" style="top:514px"><span class="cb"></span><span class="t">Perpendicular</span></div>
<div class="os" style="top:532px"><span class="cb"></span><span class="t">Tangent</span></div>
<div class="os" style="top:550px"><span class="cb"></span><span class="t">Quadrant</span></div>
<div class="os" style="top:568px"><span class="cb"></span><span class="t">Knot</span></div>
<div class="os" style="top:586px"><span class="cb on"><svg class="abs" style="left:-1px;top:-1px" width="12" height="12"><path d="M2.8 6.4L5 8.8L9.2 3" stroke="#fff" stroke-width="1.4" fill="none" stroke-linecap="round" stroke-linejoin="round"/></svg></span><span class="t">Vertex</span></div>
<div class="os dis" style="top:604px"><span class="cb"></span><span class="t">On curve</span></div>
<div class="os dis" style="top:622px"><span class="cb"></span><span class="t">On surface</span></div>
<div class="os dis" style="top:640px"><span class="cb"></span><span class="t">On polysurface</span></div>
<div class="os dis" style="top:658px"><span class="cb"></span><span class="t">On mesh</span></div>
<div class="os" style="top:676px"><span class="cb"></span><span class="t">Project</span></div>
</div>
<div id="vsep"></div>
<div id="tabs">
<svg class="abs" style="left:7px;top:3px" width="56" height="20"><path d="M4 1.5H1.5V17.5H21.5V1.5H19M8 1.5H14" stroke="#9a9a9a" stroke-width="1" fill="none"/><path d="M1.5 9.5H21.5M11 1.5V17.5" stroke="#3c3c3c" stroke-width="1.3" fill="none"/><path d="M36.5 1H33.5V18H53.5V1" stroke="#4a8ff0" stroke-width="1.3" fill="none"/></svg>
<i style="left:72px"></i>
<span style="left:91px;color:#1976f2">Perspective</span><i style="left:182.5px"></i>
<span style="left:202px">Top</span><i style="left:243.5px"></i>
<span style="left:263px">Front</span><i style="left:315px"></i>
<span style="left:334px">Right</span>
<span style="left:791px;letter-spacing:-0.3px">Layouts...</span>
</div>
<div id="vp">
<svg class="abs" style="left:0;top:0" width="858" height="666" viewBox="0 0 858 666">
<path d="M491.7 101.0L-61.6 324.2M471.5 99.5L949.7 417.3M500.9 107.0L-54.6 333.4M460.2 104.0L937.6 425.4M510.1 113.0L-47.5 342.7M448.7 108.6L925.4 433.6M519.5 119.2L-40.3 352.2M437.2 113.2L913.0 441.9M538.6 131.7L-25.6 371.6M413.8 122.5L887.8 458.8M548.4 138.1L-18.0 381.6M401.9 127.3L874.9 467.5M558.3 144.6L-10.3 391.7M389.9 132.1L861.9 476.2M568.3 151.2L-2.5 402.0M377.8 136.9L848.6 485.1M588.7 164.6L13.5 423.1M353.2 146.7L821.6 503.2M599.1 171.4L21.7 433.9M340.7 151.7L807.9 512.5M609.7 178.4L30.1 444.9M328.1 156.7L793.9 521.8M620.4 185.4L38.6 456.1M315.4 161.8L779.7 531.3M642.2 199.7L56.1 479.1M289.5 172.2L750.8 550.7M653.4 207.1L65.0 490.9M276.4 177.4L736.1 560.7M664.7 214.5L74.2 502.9M263.1 182.7L721.1 570.7M676.2 222.0L83.5 515.1M249.7 188.1L705.9 580.9M699.7 237.4L102.6 540.3M222.5 198.9L674.8 601.8M711.6 245.3L112.4 553.2M208.6 204.5L658.9 612.4M723.8 253.3L122.4 566.4M194.6 210.1L642.8 623.2M736.1 261.4L132.6 579.8M180.5 215.7L626.5 634.2M761.4 277.9L153.6 607.4M151.7 227.2L593.0 656.7M774.3 286.4L164.4 621.6M137.1 233.0L575.9 668.2M787.4 295.0L175.4 636.1M122.3 238.9L558.5 679.8M800.7 303.7L186.6 650.9M107.4 244.9L540.8 691.7M827.9 321.6L209.7 681.3M77.0 257.0L504.7 715.9M841.8 330.7L221.7 697.1M61.6 263.2L486.2 728.4M855.9 340.0L233.9 713.1M46.0 269.4L467.4 741.0M870.3 349.4L246.3 729.4M30.2 275.7L448.3 753.8M899.7 368.7L272.0 763.2M-2.0 288.5L409.1 780.1M914.8 378.6L285.2 780.7M-18.3 295.1L389.0 793.6M930.2 388.7L298.8 798.5M-34.8 301.7L368.6 807.3M945.7 398.9L312.6 816.7M-51.6 308.4L347.9 821.2" stroke="#8d939a" stroke-width="1.02" fill="none"/>
<path d="M482.7 95.0L-68.5 315.1M482.7 95.0L961.6 409.3M529.0 125.4L-33.0 361.8M425.6 117.8L900.5 450.3M578.4 157.9L5.4 412.4M365.6 141.8L835.2 494.1M631.2 192.5L47.3 467.5M302.5 167.0L765.4 541.0M687.8 229.7L426.8 360.4M236.2 193.5L426.8 360.4M748.7 269.6L143.0 593.5M166.2 221.4L609.8 645.4M814.2 312.6L198.1 666.0M92.3 250.9L522.9 703.7M884.9 359.0L259.0 746.2M14.2 282.1L428.8 766.8M961.6 409.3L326.7 835.4M-68.5 315.1L326.7 835.4" stroke="#7e838a" stroke-width="1.2" fill="none"/>
<path d="M426.8 360.4L92.9 527.6" stroke="#a63e3a" stroke-width="1.7" fill="none"/>
<path d="M426.8 360.4L690.5 591.3" stroke="#3c9c42" stroke-width="1.7" fill="none"/>

<g transform="translate(-155,-83)">
<defs><linearGradient id="gGoldSide1" gradientUnits="userSpaceOnUse" x1="470" y1="310" x2="488" y2="335"><stop offset="0" stop-color="#dca828"/><stop offset="1" stop-color="#a87c12"/></linearGradient>
<linearGradient id="gGoldSide2" gradientUnits="userSpaceOnUse" x1="500" y1="380" x2="592" y2="345"><stop offset="0" stop-color="#8a6408"/><stop offset="0.35" stop-color="#c4941c"/><stop offset="0.75" stop-color="#dcaa2c"/><stop offset="1" stop-color="#e8b838"/></linearGradient>
<linearGradient id="gGoldSide3" gradientUnits="userSpaceOnUse" x1="480" y1="415" x2="512" y2="470"><stop offset="0" stop-color="#8a6408"/><stop offset="0.3" stop-color="#b88a14"/><stop offset="0.55" stop-color="#dcaa2c"/><stop offset="1" stop-color="#b08010"/></linearGradient></defs>
<path d="M470.0 309.5C470.3 309.2 474.5 310.7 476.0 311.5C477.5 312.3 479.9 314.0 481.2 315.3C482.6 316.6 485.1 319.3 486.0 321.0C486.9 322.7 488.1 326.1 488.3 327.8C488.5 329.5 488.4 331.7 487.5 333.5C486.6 335.3 483.4 338.0 481.2 341.0C479.1 344.0 472.0 355.5 471.0 356.0C470.0 356.5 473.3 348.1 474.0 345.0C474.7 341.9 476.3 335.6 476.6 332.5C476.9 329.4 477.0 324.5 476.6 322.0C476.2 319.5 474.3 315.4 473.4 313.8C472.5 312.1 469.7 309.8 470.0 309.5Z" fill="url(#gGoldSide1)" stroke="#f7bc22" stroke-width="1.5" stroke-linejoin="round"/>
<path d="M460.9 305.9C462.9 306.0 465.6 306.8 467.5 308.0C469.4 309.2 472.0 311.6 473.4 313.8C474.8 315.9 476.1 319.2 476.6 322.0C477.1 324.8 477.0 329.1 476.6 332.5C476.2 335.9 475.2 341.2 474.0 345.0C472.8 348.8 470.7 353.9 468.8 357.5C466.8 361.1 463.3 365.7 461.0 369.0C458.7 372.3 455.2 377.0 453.1 379.4C451.0 381.8 448.7 384.9 446.9 384.8C445.1 384.7 442.5 380.9 441.0 379.0C439.5 377.1 438.4 374.6 437.0 372.0C435.6 369.4 433.1 365.1 432.0 362.0C430.9 358.9 429.8 354.6 429.7 351.2C429.6 347.9 430.3 343.3 431.0 340.0C431.7 336.7 433.0 332.4 434.4 329.4C435.8 326.4 438.1 322.6 440.0 320.0C441.9 317.4 444.8 314.1 446.9 312.2C449.0 310.3 451.9 308.4 454.0 307.5C456.1 306.6 458.9 305.8 460.9 305.9Z" fill="#f5b81e" stroke="#f8bf26" stroke-width="1.6" stroke-linejoin="round"/>
<path d="M460.1 309.5C461.9 309.5 464.4 310.3 466.0 311.4C467.7 312.4 470.1 314.6 471.3 316.5C472.6 318.4 473.8 321.4 474.2 324.0C474.7 326.5 474.6 330.3 474.2 333.4C473.9 336.5 472.9 341.3 471.9 344.7C470.8 348.0 468.9 352.7 467.2 355.9C465.4 359.2 462.3 363.3 460.2 366.3C458.1 369.2 455.0 373.5 453.1 375.6C451.2 377.8 449.1 380.5 447.5 380.5C445.9 380.4 443.5 377.0 442.2 375.3C440.9 373.5 439.8 371.3 438.6 369.0C437.4 366.7 435.1 362.8 434.1 360.0C433.1 357.2 432.2 353.3 432.0 350.3C431.9 347.3 432.6 343.1 433.2 340.2C433.8 337.2 435.0 333.3 436.2 330.6C437.5 327.9 439.6 324.5 441.3 322.2C443.0 319.8 445.6 316.8 447.5 315.1C449.4 313.5 452.0 311.8 453.9 310.9C455.8 310.1 458.3 309.4 460.1 309.5Z" fill="none" stroke="#c48a06" stroke-width="0.95"/>
<path d="M459.3 313.0C460.9 313.1 463.1 313.8 464.6 314.7C466.1 315.7 468.2 317.6 469.3 319.3C470.4 321.0 471.5 323.7 471.9 325.9C472.2 328.2 472.2 331.6 471.9 334.3C471.5 337.1 470.7 341.3 469.8 344.3C468.8 347.3 467.1 351.4 465.6 354.3C464.0 357.2 461.3 360.9 459.4 363.5C457.5 366.2 454.7 370.0 453.1 371.8C451.4 373.7 449.5 376.2 448.1 376.2C446.6 376.1 444.6 373.1 443.4 371.5C442.2 370.0 441.3 368.0 440.2 365.9C439.1 363.9 437.1 360.4 436.2 357.9C435.3 355.4 434.5 352.0 434.3 349.3C434.2 346.7 434.8 343.0 435.4 340.3C435.9 337.7 437.0 334.2 438.1 331.8C439.2 329.4 441.1 326.4 442.6 324.3C444.1 322.3 446.4 319.6 448.1 318.1C449.8 316.6 452.1 315.1 453.8 314.3C455.5 313.6 457.7 313.0 459.3 313.0Z" fill="none" stroke="#c48a06" stroke-width="0.95"/>
<clipPath id="gc1"><path d="M458.5 312.5C460.1 312.5 462.5 313.8 464.0 315.0C465.5 316.2 467.5 318.6 468.5 320.5C469.5 322.4 470.3 325.5 470.5 328.0C470.7 330.5 470.5 333.9 469.8 337.0C469.1 340.1 467.5 345.4 466.0 349.0C464.5 352.6 462.1 357.5 460.0 361.0C457.9 364.5 453.9 370.1 452.0 372.5C450.1 374.9 448.8 376.9 447.5 377.0C446.2 377.1 444.7 374.9 443.5 373.0C442.3 371.1 440.4 367.0 439.5 364.0C438.6 361.0 437.4 356.3 437.2 353.0C437.0 349.7 437.4 345.1 438.0 342.0C438.6 338.9 440.1 335.0 441.5 332.0C442.9 329.0 445.3 324.6 447.0 322.0C448.7 319.4 451.3 316.4 453.0 315.0C454.7 313.6 456.9 312.5 458.5 312.5Z"/></clipPath>
<path d="M458.5 312.5C460.1 312.5 462.5 313.8 464.0 315.0C465.5 316.2 467.5 318.6 468.5 320.5C469.5 322.4 470.3 325.5 470.5 328.0C470.7 330.5 470.5 333.9 469.8 337.0C469.1 340.1 467.5 345.4 466.0 349.0C464.5 352.6 462.1 357.5 460.0 361.0C457.9 364.5 453.9 370.1 452.0 372.5C450.1 374.9 448.8 376.9 447.5 377.0C446.2 377.1 444.7 374.9 443.5 373.0C442.3 371.1 440.4 367.0 439.5 364.0C438.6 361.0 437.4 356.3 437.2 353.0C437.0 349.7 437.4 345.1 438.0 342.0C438.6 338.9 440.1 335.0 441.5 332.0C442.9 329.0 445.3 324.6 447.0 322.0C448.7 319.4 451.3 316.4 453.0 315.0C454.7 313.6 456.9 312.5 458.5 312.5Z" fill="#b98c17" stroke="#c48a06" stroke-width="0.8"/>
<g clip-path="url(#gc1)">
<ellipse cx="456.2" cy="331.5" rx="10.5" ry="13" transform="rotate(22 456.2 331.5)" fill="#8dc3f7"/>
<ellipse cx="451.2" cy="359.0" rx="10.5" ry="13" transform="rotate(22 451.2 359.0)" fill="#8dc3f7"/>
</g>
<path d="M457.2 330.5L462.0 330.5L457.2 325.7Z" fill="#8499b8" opacity="0.75" transform="rotate(67 456.2 331.5)"/><path d="M457.2 330.5L462.0 330.5L457.2 325.7Z" fill="#8499b8" opacity="0.75" transform="rotate(157 456.2 331.5)"/><path d="M457.2 330.5L462.0 330.5L457.2 325.7Z" fill="#8499b8" opacity="0.75" transform="rotate(247 456.2 331.5)"/><path d="M457.2 330.5L462.0 330.5L457.2 325.7Z" fill="#8499b8" opacity="0.75" transform="rotate(337 456.2 331.5)"/>
<path d="M452.2 358.0L457.0 358.0L452.2 353.2Z" fill="#8499b8" opacity="0.75" transform="rotate(67 451.2 359.0)"/><path d="M452.2 358.0L457.0 358.0L452.2 353.2Z" fill="#8499b8" opacity="0.75" transform="rotate(157 451.2 359.0)"/><path d="M452.2 358.0L457.0 358.0L452.2 353.2Z" fill="#8499b8" opacity="0.75" transform="rotate(247 451.2 359.0)"/><path d="M452.2 358.0L457.0 358.0L452.2 353.2Z" fill="#8499b8" opacity="0.75" transform="rotate(337 451.2 359.0)"/>
<ellipse cx="456.3" cy="320.9" rx="5" ry="3.9" fill="#ee1418"/>
<path d="M447.3 315.9L448.5 321.7Q453.9 325.3 459.1 320.7L459.1 315.9Z" fill="#4a1878"/>
<ellipse cx="453.1" cy="315.5" rx="6.2" ry="4.7" fill="url(#gPurp)" stroke="#9a3cd2" stroke-width="1"/>
<ellipse cx="452.7" cy="314.5" rx="2.6" ry="1.5" fill="#a65cd6" opacity="0.8"/>
<ellipse cx="444.6" cy="348.2" rx="5" ry="3.9" fill="#ee1418"/>
<path d="M435.6 343.2L436.8 349.0Q442.2 352.6 447.4 348.0L447.4 343.2Z" fill="#4a1878"/>
<ellipse cx="441.4" cy="342.8" rx="6.2" ry="4.7" fill="url(#gPurp)" stroke="#9a3cd2" stroke-width="1"/>
<ellipse cx="441.0" cy="341.8" rx="2.6" ry="1.5" fill="#a65cd6" opacity="0.8"/>
<ellipse cx="460.2" cy="343.5" rx="5" ry="3.9" fill="#ee1418"/>
<path d="M451.2 338.5L452.4 344.3Q457.8 347.9 463.0 343.3L463.0 338.5Z" fill="#4a1878"/>
<ellipse cx="457.0" cy="338.1" rx="6.2" ry="4.7" fill="url(#gPurp)" stroke="#9a3cd2" stroke-width="1"/>
<ellipse cx="456.6" cy="337.1" rx="2.6" ry="1.5" fill="#a65cd6" opacity="0.8"/>
<ellipse cx="450.9" cy="372.4" rx="5" ry="3.9" fill="#ee1418"/>
<path d="M441.9 367.4L443.1 373.2Q448.5 376.8 453.7 372.2L453.7 367.4Z" fill="#4a1878"/>
<ellipse cx="447.7" cy="367.0" rx="6.2" ry="4.7" fill="url(#gPurp)" stroke="#9a3cd2" stroke-width="1"/>
<ellipse cx="447.3" cy="366.0" rx="2.6" ry="1.5" fill="#a65cd6" opacity="0.8"/><defs>
<linearGradient id="gBand" gradientUnits="userSpaceOnUse" x1="420" y1="300" x2="740" y2="600"><stop offset="0" stop-color="#1e6f51"/><stop offset="1" stop-color="#1a674b"/></linearGradient>
<linearGradient id="gOutL" gradientUnits="userSpaceOnUse" x1="414" y1="480" x2="440" y2="486"><stop offset="0" stop-color="#134c38"/><stop offset="0.6" stop-color="#1b6148"/><stop offset="1" stop-color="#1f6c50"/></linearGradient>
<linearGradient id="gIn" gradientUnits="userSpaceOnUse" x1="480" y1="575" x2="710" y2="340"><stop offset="0" stop-color="#0c4532"/><stop offset="0.28" stop-color="#124f3a"/><stop offset="0.42" stop-color="#3c8a6c"/><stop offset="0.5" stop-color="#2a7759"/><stop offset="0.62" stop-color="#4a9679"/><stop offset="0.72" stop-color="#2c7a5b"/><stop offset="0.88" stop-color="#12543c"/><stop offset="1" stop-color="#0c4633"/></linearGradient>
<linearGradient id="gLeaf" gradientUnits="userSpaceOnUse" x1="520" y1="260" x2="600" y2="325"><stop offset="0" stop-color="#1d6149"/><stop offset="0.5" stop-color="#18553f"/><stop offset="1" stop-color="#134a36"/></linearGradient>
<radialGradient id="gCup" gradientUnits="userSpaceOnUse" cx="580" cy="245" r="40"><stop offset="0" stop-color="#2f7c5f"/><stop offset="1" stop-color="#1c624a"/></radialGradient>
<radialGradient id="gPurp" cx="0.4" cy="0.35" r="0.7"><stop offset="0" stop-color="#9a45c8"/><stop offset="0.6" stop-color="#6d1f9a"/><stop offset="1" stop-color="#3e0f5e"/></radialGradient>
<linearGradient id="gGoldSide" x1="0" y1="0" x2="0" y2="1"><stop offset="0" stop-color="#d8a21a"/><stop offset="1" stop-color="#a87810"/></linearGradient>
</defs>
<path d="M622.2 241.6C636.6 229.6 623.5 241.9 626.9 243.1C630.3 244.3 637.3 246.2 642.5 248.6C647.7 250.9 652.9 253.9 658.1 257.2C663.3 260.4 669.1 264.7 673.8 268.1C678.4 271.5 682.1 274.1 686.2 277.5C690.4 280.9 694.6 284.2 698.8 288.4C702.9 292.6 707.6 297.8 711.2 302.5C714.9 307.2 718.0 312.4 720.6 316.6C723.2 320.9 724.9 324.1 726.7 328.0C728.5 331.9 730.2 335.8 731.5 340.0C732.8 344.2 734.0 348.7 734.6 353.0C735.2 357.3 735.4 361.8 735.4 366.0C735.4 370.2 735.2 373.5 734.7 378.1C734.2 382.7 733.3 388.5 732.3 393.8C731.2 399.0 730.1 403.9 728.4 409.4C726.7 414.9 724.2 421.0 722.2 426.6C720.2 432.2 718.6 437.6 716.5 443.0C714.4 448.4 712.7 453.0 709.7 458.8C706.7 464.5 702.9 471.0 698.8 477.5C694.6 484.0 689.6 491.3 684.7 497.8C679.8 504.3 674.8 510.4 669.1 516.6C663.4 522.9 656.8 529.3 650.3 535.3C643.8 541.3 635.2 548.0 630.0 552.5C624.8 557.0 624.0 558.2 619.0 562.0C614.0 565.8 605.8 571.5 600.0 575.2C594.2 579.0 590.6 581.2 584.4 584.5C578.1 587.8 569.8 591.8 562.5 594.7C555.2 597.6 547.9 600.0 540.6 601.7C533.3 603.4 526.0 604.3 518.8 604.8C511.5 605.3 503.7 605.6 496.9 604.8C490.1 604.0 483.8 602.4 478.1 600.2C472.4 598.0 467.7 595.4 462.5 591.6C457.3 587.8 451.7 582.7 446.9 577.5C442.1 572.3 437.4 566.0 433.6 560.3C429.8 554.6 426.8 549.1 424.2 543.1C421.6 537.1 419.6 530.6 418.0 524.4C416.4 518.1 415.4 511.3 414.8 505.6C414.2 499.9 413.8 496.4 414.1 490.0C414.4 483.6 414.8 476.7 416.4 467.5C417.9 458.3 420.5 444.8 423.4 434.7C426.3 424.6 430.1 413.9 433.6 406.6C437.1 399.3 440.9 395.9 444.5 391.0C448.1 386.1 451.8 382.5 455.5 377.5C459.2 372.5 462.9 366.5 466.6 361.0C470.4 355.5 474.2 349.5 478.0 344.5C481.8 339.5 485.8 335.0 489.5 331.0C493.2 327.0 496.4 323.9 500.0 320.5C503.6 317.1 506.8 313.8 511.0 310.5C515.2 307.2 520.1 299.7 525.0 300.5C529.9 301.3 524.4 325.1 540.6 315.3C556.8 305.5 607.8 253.6 622.2 241.6Z" fill="none"/>
<path d="M622.2 241.6C623.0 241.8 623.5 241.9 626.9 243.1C630.3 244.3 637.3 246.2 642.5 248.6C647.7 250.9 652.9 253.9 658.1 257.2C663.3 260.4 669.1 264.7 673.8 268.1C678.4 271.5 682.1 274.1 686.2 277.5C690.4 280.9 694.6 284.2 698.8 288.4C702.9 292.6 707.6 297.8 711.2 302.5C714.9 307.2 718.0 312.4 720.6 316.6C723.2 320.9 724.9 324.1 726.7 328.0C728.5 331.9 730.2 335.8 731.5 340.0C732.8 344.2 734.0 348.7 734.6 353.0C735.2 357.3 735.4 361.8 735.4 366.0C735.4 370.2 735.2 373.5 734.7 378.1C734.2 382.7 733.3 388.5 732.3 393.8C731.2 399.0 730.1 403.9 728.4 409.4C726.7 414.9 724.2 421.0 722.2 426.6C720.2 432.2 718.6 437.6 716.5 443.0C714.4 448.4 712.7 453.0 709.7 458.8C706.7 464.5 702.9 471.0 698.8 477.5C694.6 484.0 689.6 491.3 684.7 497.8C679.8 504.3 674.8 510.4 669.1 516.6C663.4 522.9 656.8 529.3 650.3 535.3C643.8 541.3 635.2 548.0 630.0 552.5C624.8 557.0 624.0 558.2 619.0 562.0C614.0 565.8 605.8 571.5 600.0 575.2C594.2 579.0 590.6 581.2 584.4 584.5C578.1 587.8 569.8 591.8 562.5 594.7C555.2 597.6 547.9 600.0 540.6 601.7C533.3 603.4 526.0 604.3 518.8 604.8C511.5 605.3 503.7 605.6 496.9 604.8C490.1 604.0 483.8 602.4 478.1 600.2C472.4 598.0 467.7 595.4 462.5 591.6C457.3 587.8 451.7 582.7 446.9 577.5C442.1 572.3 437.4 566.0 433.6 560.3C429.8 554.6 426.8 549.1 424.2 543.1C421.6 537.1 419.6 530.6 418.0 524.4C416.4 518.1 415.4 511.3 414.8 505.6C414.2 499.9 413.8 496.4 414.1 490.0C414.4 483.6 414.8 476.7 416.4 467.5C417.9 458.3 420.5 444.8 423.4 434.7C426.3 424.6 430.1 413.9 433.6 406.6C437.1 399.3 440.9 395.9 444.5 391.0C448.1 386.1 451.8 382.5 455.5 377.5C459.2 372.5 462.9 366.5 466.6 361.0C470.4 355.5 474.2 349.5 478.0 344.5C481.8 339.5 485.8 335.0 489.5 331.0C493.2 327.0 496.4 323.9 500.0 320.5C503.6 317.1 506.8 313.8 511.0 310.5C515.2 307.2 522.7 302.2 525.0 300.5L600 290L560 300Z M557.8 321.6C553.0 323.6 546.3 329.4 540.0 335.0C533.7 340.6 526.4 347.6 520.0 355.0C513.6 362.4 506.1 373.4 501.6 379.4C497.1 385.4 496.4 386.7 493.0 391.0C489.6 395.3 484.8 399.8 481.3 405.0C477.8 410.2 475.1 415.3 472.0 422.0C468.9 428.7 465.8 435.9 463.0 445.0C460.2 454.1 457.1 468.6 455.5 476.9C453.9 485.2 453.6 489.8 453.5 495.0C453.4 500.2 454.1 503.1 454.7 508.0C455.3 512.9 455.7 518.5 457.0 524.4C458.3 530.2 460.3 537.4 462.5 543.1C464.7 548.8 467.9 555.4 470.3 558.8C472.7 562.1 474.1 562.1 477.0 563.4C479.9 564.7 482.6 566.0 487.5 566.6C492.4 567.2 500.0 567.6 506.2 567.3C512.5 567.0 518.8 566.2 525.0 565.0C531.2 563.8 537.5 562.2 543.8 560.3C550.0 558.3 556.2 556.3 562.5 553.3C568.8 550.3 574.4 547.5 581.2 542.5C588.1 537.5 596.6 529.4 603.4 523.5C610.2 517.6 616.5 512.4 622.2 507.2C627.9 502.0 632.8 497.5 637.8 492.3C642.8 487.1 647.5 481.5 651.9 475.9C656.3 470.3 660.8 464.2 664.4 458.8C668.0 453.3 670.9 447.3 673.5 443.0C676.1 438.7 677.4 437.6 680.0 432.8C682.6 428.0 686.8 420.5 689.4 414.0C692.0 407.5 694.2 400.2 695.6 393.8C697.0 387.2 697.7 381.2 698.0 375.0C698.3 368.8 698.1 362.5 697.2 356.2C696.3 350.0 694.3 342.6 692.5 337.5C690.7 332.4 688.9 329.4 686.2 325.9C683.6 322.4 680.5 319.5 676.9 316.6C673.3 313.7 669.1 311.0 664.4 308.8C659.7 306.5 654.0 304.5 648.8 303.3C643.5 302.1 637.3 301.1 633.1 301.7C628.9 302.3 627.4 305.0 623.8 307.2C620.1 309.4 615.9 312.7 611.2 315.0C606.6 317.3 600.8 319.9 595.6 321.2C590.4 322.6 584.5 322.5 580.0 322.8C575.5 323.1 572.5 323.3 568.8 323.1C565.0 322.9 562.6 319.6 557.8 321.6Z" fill="url(#gBand)" fill-rule="evenodd" stroke="#0b5a3a" stroke-width="0.8"/>
<path d="M540.6 601.7C537.0 602.2 526.0 604.3 518.8 604.8C511.5 605.3 503.7 605.6 496.9 604.8C490.1 604.0 483.8 602.4 478.1 600.2C472.4 598.0 467.7 595.4 462.5 591.6C457.3 587.8 451.7 582.7 446.9 577.5C442.1 572.3 437.4 566.0 433.6 560.3C429.8 554.6 426.8 549.1 424.2 543.1C421.6 537.1 419.6 530.6 418.0 524.4C416.4 518.1 415.4 511.3 414.8 505.6C414.2 499.9 413.8 496.4 414.1 490.0C414.4 483.6 414.8 476.7 416.4 467.5C417.9 458.3 420.5 444.8 423.4 434.7C426.3 424.6 430.1 413.9 433.6 406.6C437.1 399.3 440.9 395.9 444.5 391.0C448.1 386.1 451.8 382.5 455.5 377.5C459.2 372.5 462.9 366.5 466.6 361.0C470.4 355.5 474.2 349.5 478.0 344.5C481.8 339.5 485.8 335.0 489.5 331.0C493.2 327.0 496.4 323.9 500.0 320.5C503.6 317.1 506.8 313.8 511.0 310.5C515.2 307.2 522.7 302.2 525.0 300.5L540.6 315.3C538.0 317.4 530.2 323.1 525.0 327.8C519.8 332.5 514.2 338.0 509.4 343.4C504.6 348.8 500.2 354.3 496.0 360.0C491.8 365.7 487.9 372.6 484.4 377.8C480.9 383.0 478.8 385.3 475.0 391.0C471.2 396.7 465.9 404.3 461.7 412.0C457.5 419.7 453.4 428.7 450.0 437.0C446.6 445.3 443.2 454.0 441.0 462.0C438.8 470.0 437.4 478.5 436.5 485.0C435.6 491.5 435.4 495.2 435.5 501.0C435.6 506.8 435.9 513.8 437.0 520.0C438.1 526.2 439.7 532.0 442.0 538.0C444.3 544.0 447.5 550.3 451.0 556.0C454.5 561.7 458.5 567.0 463.0 572.0C467.5 577.0 472.3 582.0 478.0 586.0C483.7 590.0 490.3 593.7 497.0 596.0C503.7 598.3 510.7 599.5 518.0 600.0C525.3 600.5 537.2 599.2 541.0 599.0Z" fill="url(#gOutL)"/>
<path d="M520.0 309.0C517.5 311.0 510.0 316.5 505.0 321.0C500.0 325.5 494.8 330.5 490.0 336.0C485.2 341.5 480.5 347.8 476.0 354.0C471.5 360.2 467.0 366.7 463.0 373.0C459.0 379.3 455.5 385.2 452.0 392.0C448.5 398.8 445.0 406.3 442.0 414.0C439.0 421.7 436.3 430.0 434.0 438.0C431.7 446.0 429.0 458.0 428.0 462.0" fill="none" stroke="#3a8568" stroke-width="7" stroke-linecap="round" opacity="0.55"/>
<path d="M520.0 309.0C517.5 311.0 510.0 316.5 505.0 321.0C500.0 325.5 494.8 330.5 490.0 336.0C485.2 341.5 480.5 347.8 476.0 354.0C471.5 360.2 467.0 366.7 463.0 373.0C459.0 379.3 455.5 385.2 452.0 392.0C448.5 398.8 443.7 410.3 442.0 414.0" fill="none" stroke="#4a9476" stroke-width="3" stroke-linecap="round" opacity="0.5"/>
<path d="M470.3 558.8C471.4 559.5 474.1 562.1 477.0 563.4C479.9 564.7 482.6 566.0 487.5 566.6C492.4 567.2 500.0 567.6 506.2 567.3C512.5 567.0 518.8 566.2 525.0 565.0C531.2 563.8 537.5 562.2 543.8 560.3C550.0 558.3 556.2 556.3 562.5 553.3C568.8 550.3 574.4 547.5 581.2 542.5C588.1 537.5 596.6 529.4 603.4 523.5C610.2 517.6 616.5 512.4 622.2 507.2C627.9 502.0 632.8 497.5 637.8 492.3C642.8 487.1 647.5 481.5 651.9 475.9C656.3 470.3 660.8 464.2 664.4 458.8C668.0 453.3 670.9 447.3 673.5 443.0C676.1 438.7 677.4 437.6 680.0 432.8C682.6 428.0 686.8 420.5 689.4 414.0C692.0 407.5 694.2 400.2 695.6 393.8C697.0 387.2 697.7 381.2 698.0 375.0C698.3 368.8 698.1 362.5 697.2 356.2C696.3 350.0 694.3 342.6 692.5 337.5C690.7 332.4 688.9 329.4 686.2 325.9C683.6 322.4 680.5 319.5 676.9 316.6C673.3 313.7 669.1 311.0 664.4 308.8C659.7 306.5 654.0 304.5 648.8 303.3C643.5 302.1 635.7 302.0 633.1 301.7L638.3 299.9C640.3 300.1 646.8 300.6 650.5 301.4C654.2 302.2 657.3 303.4 660.7 304.8C664.1 306.2 667.4 307.8 670.8 310.0C674.2 312.2 678.0 315.2 681.0 317.9C684.0 320.6 686.6 323.1 689.1 326.0C691.6 328.9 694.3 332.5 696.2 335.0C698.1 337.5 698.7 338.8 700.3 341.0C701.9 343.2 704.2 344.9 706.0 348.0C707.8 351.1 710.0 354.4 711.2 359.4C712.5 364.4 713.5 371.9 713.6 378.1C713.7 384.4 713.0 390.6 712.0 396.9C711.0 403.1 709.2 409.4 707.3 415.6C705.3 421.9 702.1 429.8 700.3 434.4C698.5 439.0 698.3 439.2 696.5 443.0C694.7 446.8 692.4 451.7 689.4 457.2C686.4 462.7 682.6 469.6 678.4 475.9C674.2 482.1 669.3 488.7 664.4 494.7C659.5 500.7 654.5 505.8 648.8 511.9C643.0 518.0 635.0 526.4 630.0 531.2C625.0 536.1 622.7 537.8 619.0 541.0C615.3 544.2 611.8 547.4 608.0 550.5C604.2 553.6 599.9 557.0 596.0 559.5C592.1 562.0 589.5 563.3 584.4 565.5C579.3 567.7 571.9 570.7 565.6 572.8C559.4 574.9 553.1 576.9 546.9 578.3C540.6 579.7 534.4 580.9 528.1 581.4C521.9 581.9 515.1 581.9 509.4 581.4C503.7 580.9 498.4 580.0 493.8 578.3C489.1 576.6 485.2 574.5 481.2 571.2C477.3 568.0 472.1 560.8 470.3 558.8Z" fill="url(#gIn)"/>
<path d="M470.3 558.8C472.1 560.8 477.3 568.0 481.2 571.2C485.2 574.5 489.1 576.6 493.8 578.3C498.4 580.0 503.7 580.9 509.4 581.4C515.1 581.9 521.9 581.9 528.1 581.4C534.4 580.9 540.6 579.7 546.9 578.3C553.1 576.9 559.4 574.9 565.6 572.8C571.9 570.7 579.3 567.7 584.4 565.5C589.5 563.3 592.1 562.0 596.0 559.5C599.9 557.0 604.2 553.6 608.0 550.5C611.8 547.4 615.3 544.2 619.0 541.0C622.7 537.8 625.0 536.1 630.0 531.2C635.0 526.4 643.0 518.0 648.8 511.9C654.5 505.8 659.5 500.7 664.4 494.7C669.3 488.7 674.2 482.1 678.4 475.9C682.6 469.6 686.4 462.7 689.4 457.2C692.4 451.7 694.7 446.8 696.5 443.0C698.3 439.2 698.5 439.0 700.3 434.4C702.1 429.8 705.3 421.9 707.3 415.6C709.2 409.4 711.0 403.1 712.0 396.9C713.0 390.6 713.7 384.4 713.6 378.1C713.5 371.9 712.5 364.4 711.2 359.4C710.0 354.4 707.8 351.1 706.0 348.0C704.2 344.9 701.9 343.2 700.3 341.0C698.7 338.8 698.1 337.5 696.2 335.0C694.3 332.5 691.6 328.9 689.1 326.0C686.6 323.1 684.0 320.6 681.0 317.9C678.0 315.2 674.2 312.2 670.8 310.0C667.4 307.8 664.1 306.2 660.7 304.8C657.3 303.4 654.2 302.2 650.5 301.4C646.8 300.6 640.3 300.1 638.3 299.9L706.0 338.0C707.0 339.5 710.1 343.4 712.0 347.0C713.9 350.6 716.2 354.2 717.5 359.4C718.8 364.6 719.7 371.9 719.8 378.1C719.9 384.4 719.4 390.6 718.3 396.9C717.2 403.2 715.1 410.1 713.2 416.0C711.3 421.9 709.0 427.8 707.0 432.5C705.0 437.2 703.8 439.8 701.5 444.5C699.2 449.2 696.5 455.2 693.5 461.0C690.5 466.8 687.6 472.8 683.5 479.0C679.4 485.2 674.1 492.3 669.0 498.5C663.9 504.7 658.8 509.8 653.0 516.0C647.2 522.2 640.8 529.7 634.0 536.0C627.2 542.3 618.0 549.2 612.0 554.0C606.0 558.8 602.5 561.6 598.0 564.5C593.5 567.4 590.2 569.1 585.0 571.5C579.8 573.9 572.8 576.8 566.5 579.0C560.2 581.2 553.8 583.1 547.5 584.5C541.2 585.9 534.9 587.0 528.5 587.5C522.1 588.0 515.0 588.0 509.0 587.5C503.0 587.0 497.5 586.2 492.5 584.5C487.5 582.8 483.1 580.8 479.0 577.5C474.9 574.2 469.8 567.1 468.0 565.0Z" fill="#2a7a5b" opacity="0.3"/>
<path d="M470.3 558.8C472.1 560.8 477.3 568.0 481.2 571.2C485.2 574.5 489.1 576.6 493.8 578.3C498.4 580.0 503.7 580.9 509.4 581.4C515.1 581.9 521.9 581.9 528.1 581.4C534.4 580.9 540.6 579.7 546.9 578.3C553.1 576.9 559.4 574.9 565.6 572.8C571.9 570.7 579.3 567.7 584.4 565.5C589.5 563.3 592.1 562.0 596.0 559.5C599.9 557.0 604.2 553.6 608.0 550.5C611.8 547.4 615.3 544.2 619.0 541.0C622.7 537.8 625.0 536.1 630.0 531.2C635.0 526.4 643.0 518.0 648.8 511.9C654.5 505.8 659.5 500.7 664.4 494.7C669.3 488.7 674.2 482.1 678.4 475.9C682.6 469.6 686.4 462.7 689.4 457.2C692.4 451.7 694.7 446.8 696.5 443.0C698.3 439.2 698.5 439.0 700.3 434.4C702.1 429.8 705.3 421.9 707.3 415.6C709.2 409.4 711.0 403.1 712.0 396.9C713.0 390.6 713.7 384.4 713.6 378.1C713.5 371.9 712.5 364.4 711.2 359.4C710.0 354.4 707.8 351.1 706.0 348.0C704.2 344.9 701.9 343.2 700.3 341.0C698.7 338.8 698.1 337.5 696.2 335.0C694.3 332.5 691.6 328.9 689.1 326.0C686.6 323.1 684.0 320.6 681.0 317.9C678.0 315.2 674.2 312.2 670.8 310.0C667.4 307.8 664.1 306.2 660.7 304.8C657.3 303.4 654.2 302.2 650.5 301.4C646.8 300.6 640.3 300.1 638.3 299.9" fill="none" stroke="#13ab69" stroke-width="1.3"/>
<path d="M468.0 565.0C469.8 567.1 474.9 574.2 479.0 577.5C483.1 580.8 487.5 582.8 492.5 584.5C497.5 586.2 503.0 587.0 509.0 587.5C515.0 588.0 522.1 588.0 528.5 587.5C534.9 587.0 541.2 585.9 547.5 584.5C553.8 583.1 560.2 581.2 566.5 579.0C572.8 576.8 579.8 573.9 585.0 571.5C590.2 569.1 593.5 567.4 598.0 564.5C602.5 561.6 606.0 558.8 612.0 554.0C618.0 549.2 627.2 542.3 634.0 536.0C640.8 529.7 647.2 522.2 653.0 516.0C658.8 509.8 663.9 504.7 669.0 498.5C674.1 492.3 679.4 485.2 683.5 479.0C687.6 472.8 690.5 466.8 693.5 461.0C696.5 455.2 699.2 449.2 701.5 444.5C703.8 439.8 705.0 437.2 707.0 432.5C709.0 427.8 711.3 421.9 713.2 416.0C715.1 410.1 717.2 403.2 718.3 396.9C719.4 390.6 719.9 384.4 719.8 378.1C719.7 371.9 718.8 364.6 717.5 359.4C716.2 354.2 713.9 350.6 712.0 347.0C710.1 343.4 707.0 339.5 706.0 338.0" fill="none" stroke="#12a265" stroke-width="1"/>
<path d="M540.6 315.3C538.0 317.4 530.2 323.1 525.0 327.8C519.8 332.5 514.2 338.0 509.4 343.4C504.6 348.8 500.2 354.3 496.0 360.0C491.8 365.7 487.9 372.6 484.4 377.8C480.9 383.0 478.8 385.3 475.0 391.0C471.2 396.7 465.9 404.3 461.7 412.0C457.5 419.7 453.4 428.7 450.0 437.0C446.6 445.3 443.2 454.0 441.0 462.0C438.8 470.0 437.4 478.5 436.5 485.0C435.6 491.5 435.4 495.2 435.5 501.0C435.6 506.8 435.9 513.8 437.0 520.0C438.1 526.2 439.7 532.0 442.0 538.0C444.3 544.0 447.5 550.3 451.0 556.0C454.5 561.7 458.5 567.0 463.0 572.0C467.5 577.0 472.3 582.0 478.0 586.0C483.7 590.0 490.3 593.7 497.0 596.0C503.7 598.3 510.7 599.5 518.0 600.0C525.3 600.5 537.2 599.2 541.0 599.0" fill="none" stroke="#0c4a36" stroke-width="1" transform="translate(-1,0.3)" opacity="0.6"/>
<path d="M540.6 315.3C538.0 317.4 530.2 323.1 525.0 327.8C519.8 332.5 514.2 338.0 509.4 343.4C504.6 348.8 500.2 354.3 496.0 360.0C491.8 365.7 487.9 372.6 484.4 377.8C480.9 383.0 478.8 385.3 475.0 391.0C471.2 396.7 465.9 404.3 461.7 412.0C457.5 419.7 453.4 428.7 450.0 437.0C446.6 445.3 443.2 454.0 441.0 462.0C438.8 470.0 437.4 478.5 436.5 485.0C435.6 491.5 435.4 495.2 435.5 501.0C435.6 506.8 435.9 513.8 437.0 520.0C438.1 526.2 439.7 532.0 442.0 538.0C444.3 544.0 447.5 550.3 451.0 556.0C454.5 561.7 458.5 567.0 463.0 572.0C467.5 577.0 472.3 582.0 478.0 586.0C483.7 590.0 490.3 593.7 497.0 596.0C503.7 598.3 510.7 599.5 518.0 600.0C525.3 600.5 537.2 599.2 541.0 599.0" fill="none" stroke="#13ab69" stroke-width="1.3"/>
<path d="M557.8 321.6C553.0 323.6 546.3 329.4 540.0 335.0C533.7 340.6 526.4 347.6 520.0 355.0C513.6 362.4 506.1 373.4 501.6 379.4C497.1 385.4 496.4 386.7 493.0 391.0C489.6 395.3 484.8 399.8 481.3 405.0C477.8 410.2 475.1 415.3 472.0 422.0C468.9 428.7 465.8 435.9 463.0 445.0C460.2 454.1 457.1 468.6 455.5 476.9C453.9 485.2 453.6 489.8 453.5 495.0C453.4 500.2 454.1 503.1 454.7 508.0C455.3 512.9 455.7 518.5 457.0 524.4C458.3 530.2 460.3 537.4 462.5 543.1C464.7 548.8 467.9 555.4 470.3 558.8C472.7 562.1 474.1 562.1 477.0 563.4C479.9 564.7 482.6 566.0 487.5 566.6C492.4 567.2 500.0 567.6 506.2 567.3C512.5 567.0 518.8 566.2 525.0 565.0C531.2 563.8 537.5 562.2 543.8 560.3C550.0 558.3 556.2 556.3 562.5 553.3C568.8 550.3 574.4 547.5 581.2 542.5C588.1 537.5 596.6 529.4 603.4 523.5C610.2 517.6 616.5 512.4 622.2 507.2C627.9 502.0 632.8 497.5 637.8 492.3C642.8 487.1 647.5 481.5 651.9 475.9C656.3 470.3 660.8 464.2 664.4 458.8C668.0 453.3 670.9 447.3 673.5 443.0C676.1 438.7 677.4 437.6 680.0 432.8C682.6 428.0 686.8 420.5 689.4 414.0C692.0 407.5 694.2 400.2 695.6 393.8C697.0 387.2 697.7 381.2 698.0 375.0C698.3 368.8 698.1 362.5 697.2 356.2C696.3 350.0 694.3 342.6 692.5 337.5C690.7 332.4 688.9 329.4 686.2 325.9C683.6 322.4 680.5 319.5 676.9 316.6C673.3 313.7 669.1 311.0 664.4 308.8C659.7 306.5 654.0 304.5 648.8 303.3C643.5 302.1 637.3 301.1 633.1 301.7C628.9 302.3 627.4 305.0 623.8 307.2C620.1 309.4 615.9 312.7 611.2 315.0C606.6 317.3 600.8 319.9 595.6 321.2C590.4 322.6 584.5 322.5 580.0 322.8C575.5 323.1 572.5 323.3 568.8 323.1C565.0 322.9 562.6 319.6 557.8 321.6Z" fill="none" stroke="#13ab69" stroke-width="1.3"/>
<path d="M622.2 241.6C623.0 241.8 623.5 241.9 626.9 243.1C630.3 244.3 637.3 246.2 642.5 248.6C647.7 250.9 652.9 253.9 658.1 257.2C663.3 260.4 669.1 264.7 673.8 268.1C678.4 271.5 682.1 274.1 686.2 277.5C690.4 280.9 694.6 284.2 698.8 288.4C702.9 292.6 707.6 297.8 711.2 302.5C714.9 307.2 718.0 312.4 720.6 316.6C723.2 320.9 724.9 324.1 726.7 328.0C728.5 331.9 730.2 335.8 731.5 340.0C732.8 344.2 734.0 348.7 734.6 353.0C735.2 357.3 735.4 361.8 735.4 366.0C735.4 370.2 735.2 373.5 734.7 378.1C734.2 382.7 733.3 388.5 732.3 393.8C731.2 399.0 730.1 403.9 728.4 409.4C726.7 414.9 724.2 421.0 722.2 426.6C720.2 432.2 718.6 437.6 716.5 443.0C714.4 448.4 712.7 453.0 709.7 458.8C706.7 464.5 702.9 471.0 698.8 477.5C694.6 484.0 689.6 491.3 684.7 497.8C679.8 504.3 674.8 510.4 669.1 516.6C663.4 522.9 656.8 529.3 650.3 535.3C643.8 541.3 635.2 548.0 630.0 552.5C624.8 557.0 624.0 558.2 619.0 562.0C614.0 565.8 605.8 571.5 600.0 575.2C594.2 579.0 590.6 581.2 584.4 584.5C578.1 587.8 569.8 591.8 562.5 594.7C555.2 597.6 547.9 600.0 540.6 601.7C533.3 603.4 526.0 604.3 518.8 604.8C511.5 605.3 503.7 605.6 496.9 604.8C490.1 604.0 483.8 602.4 478.1 600.2C472.4 598.0 467.7 595.4 462.5 591.6C457.3 587.8 451.7 582.7 446.9 577.5C442.1 572.3 437.4 566.0 433.6 560.3C429.8 554.6 426.8 549.1 424.2 543.1C421.6 537.1 419.6 530.6 418.0 524.4C416.4 518.1 415.4 511.3 414.8 505.6C414.2 499.9 413.8 496.4 414.1 490.0C414.4 483.6 414.8 476.7 416.4 467.5C417.9 458.3 420.5 444.8 423.4 434.7C426.3 424.6 430.1 413.9 433.6 406.6C437.1 399.3 440.9 395.9 444.5 391.0C448.1 386.1 451.8 382.5 455.5 377.5C459.2 372.5 462.9 366.5 466.6 361.0C470.4 355.5 474.2 349.5 478.0 344.5C481.8 339.5 485.8 335.0 489.5 331.0C493.2 327.0 496.4 323.9 500.0 320.5C503.6 317.1 506.8 313.8 511.0 310.5C515.2 307.2 522.7 302.2 525.0 300.5" fill="none" stroke="#0f7a50" stroke-width="0.9"/><path d="M612.0 232.0C613.7 233.6 619.7 239.8 622.2 241.6C624.7 243.4 623.5 241.9 626.9 243.1C630.3 244.3 637.3 246.2 642.5 248.6C647.7 250.9 652.9 253.9 658.1 257.2C663.3 260.4 669.1 264.7 673.8 268.1C678.4 271.5 682.1 274.1 686.2 277.5C690.4 280.9 696.7 286.6 698.8 288.4L690.0 282.0C688.3 281.2 683.7 278.6 680.0 277.5C676.3 276.4 672.2 275.7 668.0 275.6C663.8 275.5 659.3 276.1 655.0 277.0C650.7 277.9 646.2 279.5 642.0 281.0C637.8 282.5 634.5 285.3 630.0 286.0C625.5 286.7 620.0 287.7 615.0 285.0C610.0 282.3 603.2 275.8 600.0 270.0C596.8 264.2 596.7 253.3 596.0 250.0Z" fill="#1a5e46"/>
<path d="M625.0 250.0C627.6 250.5 635.4 251.4 640.6 253.1C645.8 254.8 651.6 257.7 656.2 260.2C660.9 262.6 665.2 265.7 668.8 268.0C672.3 270.2 675.9 272.8 677.3 273.8" fill="none" stroke="#2d795b" stroke-width="4" stroke-linecap="round" opacity="0.8"/>
<path d="M559.4 256.2C568.8 249.2 610.2 245.3 621.9 248.4C633.6 251.6 630.2 268.0 629.7 275.0C629.2 282.0 624.7 287.2 618.8 290.6C612.8 294.0 602.6 295.3 593.8 295.3C584.9 295.3 571.4 297.1 565.6 290.6C559.9 284.1 550.0 263.3 559.4 256.2Z" fill="#175943" />
<path d="M619.0 272.9C619.0 272.9 631.5 271.9 631.5 271.9C631.5 271.9 644.1 275.8 644.1 275.8C644.1 275.8 640.2 284.0 640.2 284.0C640.2 284.0 630.5 284.9 630.5 284.9C630.5 284.9 618.0 283.0 618.0 283.0C618.0 283.0 619.0 272.9 619.0 272.9Z" fill="#2c7759" stroke="#13ab69" stroke-width="0.9" stroke-dasharray="3.5 1.2"/>
<path d="M518.8 266.4C519.0 268.3 519.3 273.8 520.3 278.1C521.3 282.4 522.6 287.5 525.0 292.2C527.4 296.9 530.2 302.1 534.4 306.2C538.6 310.4 544.3 314.5 550.0 317.2C555.7 319.9 562.5 321.9 568.8 322.7C575.0 323.5 582.3 322.2 587.5 321.9C592.7 321.5 596.1 321.5 599.7 320.6C603.3 319.8 606.1 318.4 609.3 316.8C612.5 315.2 615.8 313.1 619.0 311.0C622.2 308.9 626.1 305.8 628.6 304.2C631.1 302.6 633.1 301.7 634.0 301.2L647.9 286.9C646.3 287.7 641.5 289.9 638.3 291.7C635.1 293.5 631.8 295.4 628.6 297.5C625.4 299.6 622.2 302.3 619.0 304.2C615.8 306.1 612.5 307.8 609.3 309.1C606.1 310.4 602.9 311.4 599.7 312.0C596.5 312.6 593.6 313.4 590.0 313.0C586.4 312.6 582.7 312.0 578.1 309.3C573.5 306.6 567.7 301.6 562.5 296.9C557.3 292.2 552.1 286.2 546.9 281.2C541.7 276.3 535.9 269.7 531.2 267.2C526.6 264.7 520.8 266.5 518.8 266.4Z" fill="url(#gLeaf)" stroke="#0b5a3a" stroke-width="0.8"/>
<path d="M637.3 300.1C638.1 298.7 646.6 294.4 650.5 292.4C654.4 290.5 657.3 289.3 660.7 288.4C664.0 287.4 667.4 286.9 670.8 286.9C674.2 286.8 677.9 287.1 681.0 287.9C684.0 288.7 688.4 290.5 689.1 291.6C689.8 292.7 687.1 293.8 685.1 294.5C683.0 295.1 680.0 295.2 676.9 295.5C673.9 295.8 670.5 296.0 666.8 296.5C663.0 297.0 658.1 297.9 654.6 298.5C651.0 299.2 648.3 300.1 645.4 300.4C642.5 300.6 636.4 301.4 637.3 300.1Z" fill="#134c38" />
<path d="M690.1 290.4C692.5 291.2 697.8 295.5 701.3 298.5C704.9 301.6 708.4 305.2 711.5 308.7C714.5 312.3 717.2 316.0 719.6 319.9C722.0 323.8 724.3 328.2 725.7 332.1C727.2 336.0 728.4 341.4 728.4 343.3C728.4 345.1 727.0 345.8 725.7 343.3C724.4 340.7 722.5 332.3 720.6 328.0C718.8 323.8 716.9 321.2 714.5 317.9C712.2 314.5 709.3 310.7 706.4 307.7C703.5 304.6 700.5 301.8 697.3 299.6C694.0 297.3 688.3 295.5 687.1 294.0C685.9 292.4 687.8 289.6 690.1 290.4Z" fill="#165841" />
<path d="M533.6 258.6C533.1 259.6 541.0 261.1 545.3 264.1C549.6 267.1 554.7 272.2 559.4 276.6C564.1 281.0 569.2 286.7 573.4 290.6C577.6 294.5 580.8 298.1 584.4 299.8C588.0 301.5 591.6 301.0 595.0 300.8C598.4 300.6 600.5 299.6 604.5 298.4C608.5 297.2 616.0 295.2 619.0 293.6C622.0 292.0 625.1 289.2 622.8 288.8C620.5 288.4 610.5 291.1 605.0 291.0C599.5 290.9 595.0 290.2 590.0 288.0C585.0 285.8 580.0 281.7 575.0 278.0C570.0 274.3 564.5 269.3 560.0 266.0C555.5 262.7 552.4 259.2 548.0 258.0C543.6 256.8 534.1 257.6 533.6 258.6Z" fill="#1d654b" />
<path d="M521.1 262.5C522.1 261.9 524.9 259.6 527.0 259.0C529.1 258.4 530.6 257.8 533.6 258.6C536.6 259.5 541.0 261.1 545.3 264.1C549.6 267.1 554.7 272.2 559.4 276.6C564.1 281.0 569.2 286.7 573.4 290.6C577.6 294.5 580.8 298.1 584.4 299.8C588.0 301.5 591.6 301.0 595.0 300.8C598.4 300.6 600.5 299.6 604.5 298.4C608.5 297.2 614.7 295.4 619.0 293.6C623.3 291.8 627.0 289.7 630.5 287.8C634.0 285.9 637.0 283.6 640.2 282.0C643.4 280.4 646.6 279.2 649.8 278.2C653.0 277.2 655.8 276.6 659.5 276.2C663.2 275.8 667.5 275.3 672.0 275.8C676.5 276.3 682.2 277.2 686.5 279.1C690.8 281.1 696.1 286.1 698.0 287.5L697.3 290.4C695.6 289.5 690.5 286.5 687.1 285.3C683.7 284.1 680.2 283.4 676.9 283.0C673.6 282.6 670.4 282.8 667.2 283.0C664.0 283.2 660.8 283.4 657.6 284.0C654.4 284.6 651.1 285.6 647.9 286.9C644.7 288.2 641.5 289.9 638.3 291.7C635.1 293.5 631.8 295.4 628.6 297.5C625.4 299.6 622.2 302.3 619.0 304.2C615.8 306.1 612.5 307.8 609.3 309.1C606.1 310.4 602.9 311.4 599.7 312.0C596.5 312.6 593.6 313.4 590.0 313.0C586.4 312.6 582.7 312.0 578.1 309.3C573.5 306.6 567.7 301.6 562.5 296.9C557.3 292.2 552.1 286.2 546.9 281.2C541.7 276.3 535.9 269.7 531.2 267.2C526.6 264.7 520.8 266.5 518.8 266.4Z" fill="#226d52"/>
<path d="M527.0 263.5C529.2 264.1 535.7 264.3 540.0 267.0C544.3 269.7 548.3 275.0 553.0 279.5C557.7 284.0 563.3 289.8 568.0 294.0C572.7 298.2 577.0 302.4 581.0 304.5C585.0 306.6 588.3 306.8 592.0 306.8C595.7 306.9 599.3 305.9 603.0 304.8C606.7 303.7 610.3 301.9 614.0 300.0C617.7 298.1 621.3 295.7 625.0 293.5C628.7 291.3 632.5 288.9 636.0 287.0C639.5 285.1 642.5 283.5 646.0 282.3C649.5 281.1 653.3 280.2 657.0 279.7C660.7 279.2 664.2 279.1 668.0 279.2C671.8 279.3 676.2 279.6 680.0 280.5C683.8 281.4 689.2 283.8 691.0 284.5" fill="none" stroke="#3d8b6c" stroke-width="2.8" stroke-linecap="round" opacity="0.9"/>
<path d="M518.8 266.4C520.8 266.5 526.6 264.7 531.2 267.2C535.9 269.7 541.7 276.3 546.9 281.2C552.1 286.2 557.3 292.2 562.5 296.9C567.7 301.6 573.5 306.6 578.1 309.3C582.7 312.0 586.4 312.6 590.0 313.0C593.6 313.4 596.5 312.6 599.7 312.0C602.9 311.4 606.1 310.4 609.3 309.1C612.5 307.8 615.8 306.1 619.0 304.2C622.2 302.3 625.4 299.6 628.6 297.5C631.8 295.4 635.1 293.5 638.3 291.7C641.5 289.9 644.7 288.2 647.9 286.9C651.1 285.6 654.4 284.6 657.6 284.0C660.8 283.4 664.0 283.2 667.2 283.0C670.4 282.8 673.6 282.6 676.9 283.0C680.2 283.4 683.7 284.1 687.1 285.3C690.5 286.5 693.9 288.0 697.3 290.4C700.7 292.8 704.4 296.4 707.4 299.6C710.4 302.8 713.1 306.3 715.5 309.7C717.9 313.1 719.6 315.8 721.6 319.9C723.6 324.0 726.2 330.1 727.7 334.1C729.2 338.1 730.0 340.4 730.8 344.0C731.6 347.6 732.3 354.0 732.6 356.0" fill="none" stroke="#13ab69" stroke-width="1.2" stroke-linecap="round" opacity="1"/>
<path d="M521.1 262.5C522.1 261.9 524.9 259.6 527.0 259.0C529.1 258.4 530.6 257.8 533.6 258.6C536.6 259.5 541.0 261.1 545.3 264.1C549.6 267.1 554.7 272.2 559.4 276.6C564.1 281.0 569.2 286.7 573.4 290.6C577.6 294.5 580.8 298.1 584.4 299.8C588.0 301.5 591.6 301.0 595.0 300.8C598.4 300.6 600.5 299.6 604.5 298.4C608.5 297.2 614.7 295.4 619.0 293.6C623.3 291.8 627.0 289.7 630.5 287.8C634.0 285.9 637.0 283.6 640.2 282.0C643.4 280.4 646.6 279.2 649.8 278.2C653.0 277.2 655.8 276.6 659.5 276.2C663.2 275.8 667.5 275.3 672.0 275.8C676.5 276.3 682.2 277.2 686.5 279.1C690.8 281.1 696.1 286.1 698.0 287.5" fill="none" stroke="#13ab69" stroke-width="1.2" stroke-linecap="round" opacity="1"/>
<path d="M584.4 300.5C585.3 299.7 586.6 296.9 590.0 295.5C593.4 294.1 599.5 293.4 605.0 292.3C610.5 291.2 619.8 289.4 622.8 288.8" fill="none" stroke="#13ab69" stroke-width="1.1" stroke-linecap="round" opacity="1"/>
<path d="M687.1 294.0C688.8 294.9 694.0 297.3 697.3 299.6C700.5 301.8 703.5 304.6 706.4 307.7C709.3 310.7 712.2 314.5 714.5 317.9C716.9 321.2 718.9 325.0 720.6 328.0C722.3 331.1 723.6 333.5 724.7 336.2C725.7 338.8 726.6 342.7 726.9 344.0" fill="none" stroke="#13ab69" stroke-width="1.1" stroke-linecap="round" opacity="1"/>
<path d="M622.2 241.6C623.0 241.8 623.5 241.9 626.9 243.1C630.3 244.3 637.3 246.2 642.5 248.6C647.7 250.9 652.9 253.9 658.1 257.2C663.3 260.4 669.1 264.7 673.8 268.1C678.4 271.5 682.1 274.1 686.2 277.5C690.4 280.9 696.7 286.6 698.8 288.4" fill="none" stroke="#13ab69" stroke-width="1.1" stroke-linecap="round" opacity="1"/>
<path d="M625.0 248.4C627.6 248.8 635.4 249.2 640.6 250.8C645.8 252.3 651.3 255.1 656.2 257.8C661.2 260.5 666.4 264.4 670.3 267.2C674.2 270.0 678.1 273.4 679.7 274.7" fill="none" stroke="#13ab69" stroke-width="0.9" stroke-linecap="round" opacity="1"/>
<path d="M591.9 269.5C592.9 270.2 596.8 273.1 597.7 273.8" fill="none" stroke="#13ab69" stroke-width="1.2" stroke-linecap="round" opacity="1"/>
<path d="M602.5 264.7C603.8 265.3 607.7 267.5 610.3 268.5C612.8 269.6 616.7 270.5 618.0 270.9" fill="none" stroke="#13ab69" stroke-width="1.2" stroke-linecap="round" opacity="1"/>
<defs>
<linearGradient id="gCupB" gradientUnits="userSpaceOnUse" x1="555" y1="240" x2="625" y2="250"><stop offset="0" stop-color="#1b6048"/><stop offset="0.28" stop-color="#34836a"/><stop offset="0.55" stop-color="#226c51"/><stop offset="0.8" stop-color="#2c785b"/><stop offset="1" stop-color="#195c45"/></linearGradient>
<linearGradient id="gCupS" gradientUnits="userSpaceOnUse" x1="0" y1="228" x2="0" y2="270"><stop offset="0" stop-color="#0f4836" stop-opacity="0.75"/><stop offset="0.3" stop-color="#0f4836" stop-opacity="0"/><stop offset="0.7" stop-color="#0f4836" stop-opacity="0"/><stop offset="1" stop-color="#0f4836" stop-opacity="0.6"/></linearGradient>
<linearGradient id="gLP" gradientUnits="userSpaceOnUse" x1="540" y1="185" x2="575" y2="215"><stop offset="0" stop-color="#114735"/><stop offset="1" stop-color="#1d6349"/></linearGradient>
<linearGradient id="gWall" gradientUnits="userSpaceOnUse" x1="532" y1="0" x2="556" y2="0"><stop offset="0" stop-color="#15523d"/><stop offset="0.45" stop-color="#3a876a"/><stop offset="0.75" stop-color="#1d6249"/><stop offset="1" stop-color="#175841"/></linearGradient>
</defs>
<path d="M558.8 265.7C557.1 268.7 559.5 277.9 560.8 281.9C562.2 286.0 564.6 287.9 566.9 290.1C569.3 292.3 571.7 294.3 575.1 295.1C578.4 296.0 582.8 295.6 587.3 295.1C591.7 294.6 596.7 293.3 601.5 292.1C606.2 290.9 612.7 289.0 615.7 288.0C618.8 287.0 619.4 287.3 619.8 286.0C620.1 284.6 620.1 280.6 617.7 279.9C615.4 279.2 609.6 281.3 605.5 281.9C601.5 282.5 596.7 283.6 593.4 283.4C590.0 283.3 587.3 282.2 585.2 280.9C583.2 279.6 581.8 278.4 581.2 275.8C580.5 273.3 582.8 267.7 581.2 265.7C579.5 263.6 574.7 263.6 571.0 263.6C567.3 263.6 560.5 262.6 558.8 265.7Z" fill="#1f6a4f" />
<path d="M565.4 272.8C565.7 274.3 565.7 279.2 566.9 281.9C568.2 284.6 570.3 287.3 573.0 289.0C575.7 290.7 579.1 291.9 583.2 292.1C587.3 292.3 595.0 290.4 597.4 290.1" fill="none" stroke="#3c8a6b" stroke-width="4.5" stroke-linecap="round" opacity="0.8"/>
<path d="M560.8 269.7C561.0 271.8 560.8 278.5 561.8 281.9C562.9 285.3 564.7 287.9 566.9 290.1C569.1 292.3 573.7 294.3 575.1 295.1" fill="none" stroke="#14a868" stroke-width="0.9" stroke-linecap="round" opacity="1"/>
<path d="M583.2 269.7C580.8 271.1 585.2 274.3 587.3 275.8C589.3 277.3 592.0 278.5 595.4 278.9C598.8 279.2 603.9 278.4 607.6 277.9C611.3 277.3 616.1 277.2 617.7 275.8C619.4 274.5 620.5 271.1 617.7 269.7C615.0 268.4 607.2 267.7 601.5 267.7C595.7 267.7 585.6 268.4 583.2 269.7Z" fill="#134c39" />
<path d="M590.3 268.7C591.5 269.6 596.2 272.9 597.4 273.8" fill="none" stroke="#14a868" stroke-width="1.1" stroke-linecap="round" opacity="1"/>
<path d="M601.5 264.6C602.8 265.5 606.7 268.5 609.6 269.7C612.5 271.0 617.2 271.8 618.8 272.3" fill="none" stroke="#14a868" stroke-width="1.1" stroke-linecap="round" opacity="1"/>
<path d="M529.9 193.6C529.9 191.0 530.6 189.1 531.7 187.0C532.9 185.0 534.6 182.9 536.9 181.4C539.2 179.9 542.4 178.5 545.4 178.1C548.4 177.7 551.6 178.3 554.8 179.0C557.9 179.8 561.2 181.1 564.2 182.3C567.1 183.6 570.1 185.3 572.6 186.6C575.1 187.8 577.0 189.9 579.2 189.9C581.4 189.8 583.1 187.1 585.8 186.1C588.5 185.1 592.1 184.1 595.2 183.7C598.3 183.4 601.5 183.3 604.6 183.7C607.7 184.2 611.0 185.2 614.0 186.6C617.0 187.9 619.9 189.9 622.4 191.7C624.9 193.6 627.6 196.1 629.0 197.8C630.4 199.6 630.9 200.4 630.9 202.1C630.9 203.7 630.3 206.0 629.0 207.7C627.8 209.4 625.9 210.5 623.4 212.4C620.9 214.3 614.6 217.0 614.0 219.0C613.4 221.0 618.1 222.4 619.6 224.6C621.2 226.8 622.6 229.3 623.4 232.2C624.2 235.0 624.4 240.5 624.3 241.5C624.2 242.6 623.2 237.6 622.8 238.2C622.4 238.8 622.7 243.0 621.8 245.3C621.0 247.7 619.8 250.2 617.7 252.4C615.7 254.6 612.7 256.7 609.6 258.5C606.6 260.4 603.2 262.1 599.4 263.6C595.7 265.2 591.3 266.8 587.3 267.7C583.2 268.5 578.6 268.9 575.1 268.7C571.5 268.5 567.9 266.8 565.9 266.7C563.9 266.5 564.6 267.4 562.9 267.7C561.2 268.0 558.1 269.2 555.7 268.7C553.4 268.2 550.8 266.5 548.6 264.6C546.4 262.8 544.4 260.2 542.5 257.5C540.7 254.8 538.5 251.3 537.4 248.4C536.3 245.5 535.9 242.8 535.9 240.2C535.9 237.7 537.0 235.1 537.4 233.1C537.9 231.2 538.6 230.1 538.8 228.4C539.0 226.7 539.4 225.3 538.8 222.8C538.2 220.2 536.3 216.6 535.0 213.4C533.8 210.1 532.1 206.3 531.3 203.0C530.4 199.7 529.8 196.3 529.9 193.6Z" fill="#1c634a" stroke="#0c553a" stroke-width="0.9"/>
<path d="M529.9 193.6C529.9 191.0 530.6 189.1 531.7 187.0C532.9 185.0 535.7 181.4 536.9 181.4C538.2 181.4 539.0 185.0 539.3 187.0C539.6 189.1 538.6 191.0 538.8 193.6C539.0 196.3 539.3 199.9 540.2 203.0C541.1 206.1 542.9 209.4 544.4 212.4C545.9 215.4 547.8 218.2 549.1 220.9C550.5 223.5 551.8 225.9 552.4 228.4C553.1 230.9 552.7 233.9 552.9 235.9C553.1 237.9 552.9 237.5 553.7 240.2C554.5 243.0 556.2 248.9 557.8 252.4C559.3 256.0 561.5 259.2 562.9 261.6C564.2 264.0 565.9 265.7 565.9 266.7C565.9 267.7 564.6 267.4 562.9 267.7C561.2 268.0 558.1 269.2 555.7 268.7C553.4 268.2 550.8 266.5 548.6 264.6C546.4 262.8 544.4 260.2 542.5 257.5C540.7 254.8 538.5 251.3 537.4 248.4C536.3 245.5 535.9 242.8 535.9 240.2C535.9 237.7 537.0 236.0 537.4 233.1C537.9 230.2 539.2 226.0 538.8 222.8C538.4 219.5 536.3 216.6 535.0 213.4C533.8 210.1 532.1 206.3 531.3 203.0C530.4 199.7 529.8 196.3 529.9 193.6Z" fill="url(#gWall)" />
<path d="M529.9 193.6C529.3 191.4 530.6 189.1 531.7 187.0C532.9 185.0 534.6 182.9 536.9 181.4C539.2 179.9 542.4 178.5 545.4 178.1C548.4 177.7 551.6 178.3 554.8 179.0C557.9 179.8 561.2 181.1 564.2 182.3C567.1 183.6 570.1 185.3 572.6 186.6C575.1 187.8 578.3 188.9 579.2 189.9C580.2 190.8 579.7 192.5 578.3 192.2C576.9 191.9 573.7 189.5 570.8 188.0C567.8 186.5 563.5 184.5 560.4 183.3C557.3 182.1 554.8 181.0 552.0 180.9C549.1 180.9 545.6 181.8 543.5 182.8C541.4 183.8 540.1 185.2 539.3 187.0C538.5 188.8 539.5 191.4 538.8 193.6C538.1 195.8 536.5 200.2 535.0 200.2C533.5 200.2 530.4 195.8 529.9 193.6Z" fill="#236d52" />
<path d="M539.3 187.0C540.1 185.2 541.4 183.8 543.5 182.8C545.6 181.8 549.1 180.9 552.0 180.9C554.8 181.0 557.3 182.1 560.4 183.3C563.5 184.5 567.8 186.5 570.8 188.0C573.7 189.5 576.7 191.0 578.3 192.2C579.8 193.5 580.8 194.5 580.2 195.5C579.5 196.5 576.7 197.2 574.5 198.3C572.3 199.4 569.3 200.4 567.0 202.1C564.6 203.7 562.8 206.9 560.4 208.2C558.1 209.4 554.8 209.0 552.9 209.6C551.0 210.1 549.2 209.3 549.1 211.5C549.1 213.7 552.4 221.2 552.4 222.8C552.4 224.3 550.5 222.6 549.1 220.9C547.8 219.1 545.9 215.4 544.4 212.4C542.9 209.4 541.1 206.1 540.2 203.0C539.3 199.9 539.0 196.3 538.8 193.6C538.6 191.0 538.5 188.8 539.3 187.0Z" fill="url(#gLP)" />
<path d="M549.1 210.5C548.4 209.0 548.2 203.5 548.7 200.2C549.1 196.9 550.2 193.3 552.0 190.8C553.8 188.3 557.0 185.8 559.5 185.2C562.0 184.5 564.5 185.9 567.0 187.0C569.5 188.1 572.3 190.3 574.5 191.7C576.7 193.1 580.5 194.6 580.2 195.5C579.8 196.4 575.0 196.3 572.6 197.4C570.3 198.5 568.1 200.3 566.1 202.1C564.0 203.9 562.6 206.9 560.4 208.2C558.2 209.4 554.8 209.2 552.9 209.6C551.0 210.0 549.8 212.1 549.1 210.5Z" fill="#1e654b" />
<path d="M552.0 203.0C551.2 200.8 552.0 196.9 552.9 194.6C553.8 192.2 555.7 189.9 557.6 188.9C559.5 188.0 562.0 188.3 564.2 188.9C566.4 189.5 570.3 191.3 570.8 192.7C571.2 194.1 568.4 195.7 567.0 197.4C565.6 199.1 563.9 201.3 562.3 203.0C560.7 204.7 559.3 207.7 557.6 207.7C555.9 207.7 552.7 205.2 552.0 203.0Z" fill="#27735a" />
<path d="M579.2 189.9C580.2 188.8 583.1 187.1 585.8 186.1C588.5 185.1 592.1 184.1 595.2 183.7C598.3 183.4 601.5 183.3 604.6 183.7C607.7 184.2 611.0 185.2 614.0 186.6C617.0 187.9 619.9 189.9 622.4 191.7C624.9 193.6 627.6 196.1 629.0 197.8C630.4 199.6 630.9 200.4 630.9 202.1C630.9 203.7 630.3 206.0 629.0 207.7C627.8 209.4 625.9 210.5 623.4 212.4C620.9 214.3 617.1 217.9 614.0 219.0C610.9 220.1 607.2 219.5 604.6 219.0C601.9 218.5 598.0 217.1 598.0 216.2C598.0 215.2 601.9 214.4 604.6 213.4C607.2 212.3 611.0 211.2 614.0 209.6C617.0 208.0 620.6 205.8 622.4 204.0C624.2 202.2 624.9 200.4 624.8 198.8C624.6 197.1 623.1 195.7 621.5 194.1C619.9 192.5 617.4 190.6 614.9 189.4C612.4 188.1 609.4 187.1 606.5 186.6C603.5 186.0 600.2 185.9 597.1 186.1C593.9 186.3 590.5 187.0 587.7 188.0C584.8 189.0 581.6 191.9 580.2 192.2C578.7 192.5 578.3 190.9 579.2 189.9Z" fill="#236d52" />
<path d="M580.2 192.2C580.8 190.6 584.8 189.0 587.7 188.0C590.5 187.0 593.9 186.3 597.1 186.1C600.2 185.9 603.5 186.0 606.5 186.6C609.4 187.1 612.4 188.1 614.9 189.4C617.4 190.6 619.9 192.5 621.5 194.1C623.1 195.7 624.6 197.1 624.8 198.8C624.9 200.4 624.2 202.2 622.4 204.0C620.6 205.8 617.0 208.0 614.0 209.6C611.0 211.2 607.2 212.3 604.6 213.4C601.9 214.4 599.6 216.2 598.0 216.2C596.4 216.2 596.3 214.8 595.2 213.4C594.1 211.9 592.7 209.6 591.4 207.7C590.2 205.8 588.9 203.8 587.7 202.1C586.4 200.4 585.2 199.0 583.9 197.4C582.7 195.7 579.5 193.8 580.2 192.2Z" fill="#185a43" />
<path d="M585.8 194.6C586.4 192.7 591.0 191.7 593.3 190.8C595.7 189.9 598.0 188.9 599.9 189.4C601.8 189.9 603.3 191.7 604.6 193.6C605.8 195.6 607.1 198.8 607.4 201.1C607.7 203.5 607.6 205.8 606.5 207.7C605.4 209.6 602.6 211.5 600.8 212.4C599.1 213.4 597.4 214.0 596.1 213.4C594.9 212.7 594.4 210.5 593.3 208.7C592.2 206.8 590.8 204.4 589.5 202.1C588.3 199.7 585.2 196.4 585.8 194.6Z" fill="#21694e" />
<path d="M607.4 193.6C608.3 192.2 611.8 192.1 614.0 192.7C616.2 193.3 619.3 195.8 620.6 197.4C621.8 198.9 622.6 200.4 621.5 202.1C620.4 203.8 616.2 206.5 614.0 207.7C611.8 209.0 609.2 210.7 608.3 209.6C607.5 208.5 609.0 203.8 608.8 201.1C608.7 198.5 606.5 195.0 607.4 193.6Z" fill="#1f674d" />
<path d="M564.2 203.0C564.2 201.6 565.6 198.8 567.0 197.4C568.4 196.0 570.4 195.0 572.6 194.6C574.8 194.1 577.6 194.1 580.2 194.6C582.7 195.0 585.5 196.0 587.7 197.4C589.9 198.8 592.1 201.0 593.3 203.0C594.6 205.1 595.0 207.7 595.2 209.6C595.3 211.5 595.8 214.3 594.2 214.3C592.7 214.3 588.8 211.0 585.8 209.6C582.8 208.2 579.5 206.5 576.4 205.8C573.3 205.2 569.0 206.3 567.0 205.8C565.0 205.4 564.2 204.4 564.2 203.0Z" fill="#1a5c45" />
<path d="M568.9 200.2C569.2 199.2 571.1 197.6 572.6 196.9C574.2 196.2 576.2 195.7 578.3 196.0C580.3 196.2 583.1 197.3 584.8 198.3C586.6 199.3 588.5 201.1 588.6 202.1C588.8 203.1 587.2 204.2 585.8 204.4C584.4 204.7 582.0 203.7 580.2 203.5C578.3 203.2 576.1 203.1 574.5 203.0C572.9 202.9 571.7 203.5 570.8 203.0C569.8 202.5 568.6 201.2 568.9 200.2Z" fill="#2f7c5f" />
<path d="M572.6 199.3C572.9 198.6 575.0 197.5 576.4 197.2C577.8 196.9 580.2 197.0 581.1 197.4C582.0 197.7 582.5 198.8 582.0 199.3C581.6 199.7 579.5 199.9 578.3 200.2C577.0 200.5 575.5 201.3 574.5 201.1C573.6 201.0 572.3 199.9 572.6 199.3Z" fill="#15523d" />
<path d="M575.0 199.1C575.0 198.8 576.9 198.0 577.8 197.9C578.7 197.8 580.2 198.2 580.2 198.5C580.2 198.8 578.7 199.6 577.8 199.7C576.9 199.8 575.0 199.4 575.0 199.1Z" fill="#4f9c7e" />
<path d="M576.4 201.1C576.7 200.6 580.2 200.0 582.0 200.2C583.9 200.4 586.4 201.4 587.7 202.1C588.9 202.8 590.0 204.0 589.5 204.4C589.1 204.9 586.4 205.1 584.8 204.9C583.3 204.7 581.6 204.1 580.2 203.5C578.7 202.9 576.1 201.7 576.4 201.1Z" fill="#4a9678" />
<path d="M560.4 208.7C561.8 207.7 564.3 206.3 567.0 205.8C569.7 205.4 573.3 205.2 576.4 205.8C579.5 206.5 582.8 208.2 585.8 209.6C588.8 211.0 592.7 213.0 594.2 214.3C595.8 215.5 597.2 216.4 595.2 217.1C593.2 217.8 586.1 218.4 582.0 218.5C578.0 218.7 574.0 218.6 570.8 218.1C567.5 217.5 564.3 216.3 562.3 215.2C560.3 214.1 558.8 212.6 558.5 211.5C558.2 210.4 559.0 209.6 560.4 208.7Z" fill="#2a775a" />
<path d="M568.9 209.6C569.5 208.6 573.9 208.0 576.4 208.2C578.9 208.3 582.0 209.5 583.9 210.5C585.8 211.6 588.3 213.5 587.7 214.3C587.0 215.1 582.7 215.2 580.2 215.2C577.6 215.2 574.5 215.2 572.6 214.3C570.8 213.4 568.2 210.6 568.9 209.6Z" fill="#479475" />
<path d="M553.7 226.0C551.0 227.9 554.0 235.8 554.7 240.2C555.4 244.7 556.4 248.9 557.8 252.4C559.1 256.0 561.5 259.2 562.9 261.6C564.2 264.0 563.9 265.5 565.9 266.7C567.9 267.9 571.5 268.5 575.1 268.7C578.6 268.9 583.2 268.5 587.3 267.7C591.3 266.8 595.7 265.2 599.4 263.6C603.2 262.1 606.6 260.4 609.6 258.5C612.7 256.7 615.7 254.6 617.7 252.4C619.8 250.2 621.0 247.7 621.8 245.3C622.7 243.0 623.2 240.2 622.8 238.2C622.5 236.2 621.6 234.7 619.8 233.1C617.9 231.6 616.4 229.7 611.6 229.1C606.9 228.5 598.1 229.6 591.3 229.6C584.5 229.6 577.3 229.7 571.0 229.1C564.7 228.5 556.4 224.2 553.7 226.0Z" fill="url(#gCupB)" />
<path d="M553.7 226.0C551.0 227.9 554.0 235.8 554.7 240.2C555.4 244.7 556.4 248.9 557.8 252.4C559.1 256.0 561.5 259.2 562.9 261.6C564.2 264.0 563.9 265.5 565.9 266.7C567.9 267.9 571.5 268.5 575.1 268.7C578.6 268.9 583.2 268.5 587.3 267.7C591.3 266.8 595.7 265.2 599.4 263.6C603.2 262.1 606.6 260.4 609.6 258.5C612.7 256.7 615.7 254.6 617.7 252.4C619.8 250.2 621.0 247.7 621.8 245.3C622.7 243.0 623.2 240.2 622.8 238.2C622.5 236.2 621.6 234.7 619.8 233.1C617.9 231.6 616.4 229.7 611.6 229.1C606.9 228.5 598.1 229.6 591.3 229.6C584.5 229.6 577.3 229.7 571.0 229.1C564.7 228.5 556.4 224.2 553.7 226.0Z" fill="url(#gCupS)" />
<path d="M549.1 211.5C549.8 211.2 551.5 209.4 552.9 209.6C554.3 209.8 556.2 211.0 557.6 212.4C559.0 213.8 559.5 216.3 561.4 218.1C563.2 219.8 565.7 221.7 568.9 222.8C572.0 223.8 576.1 224.6 580.2 224.6C584.2 224.6 589.2 223.4 593.3 222.8C597.4 222.1 601.5 221.2 604.6 220.9C607.7 220.6 609.9 219.9 612.1 220.9C614.3 221.8 616.2 224.3 617.7 226.5C619.3 228.7 620.6 231.2 621.5 234.0C622.4 236.8 622.7 241.9 622.9 243.4L619.8 244.4C619.5 243.6 618.7 241.5 617.7 239.7C616.8 237.8 615.6 235.0 614.0 233.1C612.4 231.2 611.5 229.1 608.3 228.4C605.2 227.7 599.6 228.5 595.2 228.9C590.8 229.3 586.4 230.6 582.0 230.7C577.6 230.9 572.6 230.3 568.9 229.8C565.1 229.3 562.2 228.6 559.5 227.5C556.7 226.3 553.6 223.5 552.4 222.8Z" fill="#226c51"/>
<path d="M552.0 216.2C552.9 217.0 554.8 219.2 557.6 220.9C560.4 222.6 564.8 225.2 568.9 226.3C572.9 227.5 577.6 227.7 582.0 227.6C586.4 227.5 591.0 226.3 595.2 225.8C599.4 225.3 604.3 224.2 607.4 224.6C610.5 225.1 612.1 226.4 614.0 228.4C615.9 230.4 617.9 235.4 618.7 236.8" fill="none" stroke="#4a9878" stroke-width="2.6" stroke-linecap="round" opacity="0.85"/>
<path d="M539.3 187.0C540.0 186.3 541.4 183.8 543.5 182.8C545.6 181.8 549.1 180.9 552.0 180.9C554.8 181.0 557.3 182.1 560.4 183.3C563.5 184.5 567.8 186.5 570.8 188.0C573.7 189.5 577.0 191.5 578.3 192.2" fill="none" stroke="#14a868" stroke-width="1.2" stroke-linecap="round" opacity="1"/>
<path d="M539.3 187.0C539.2 188.1 538.6 191.0 538.8 193.6C539.0 196.3 539.3 199.9 540.2 203.0C541.1 206.1 542.9 209.4 544.4 212.4C545.9 215.4 547.8 218.2 549.1 220.9C550.5 223.5 551.8 225.9 552.4 228.4C553.1 230.9 552.7 233.9 552.9 235.9C553.1 237.9 552.9 237.2 553.7 240.2C554.5 243.3 556.2 250.8 557.8 254.5C559.3 258.2 562.0 261.3 562.9 262.6" fill="none" stroke="#14a868" stroke-width="1.2" stroke-linecap="round" opacity="1"/>
<path d="M533.2 185.2C533.3 186.9 533.3 191.4 534.1 195.5C534.9 199.6 536.4 204.9 537.9 209.6C539.3 214.3 541.6 219.0 542.6 223.7C543.5 228.4 543.5 235.0 543.5 237.8C543.5 240.5 542.3 237.6 542.5 240.2C542.7 242.9 543.2 249.4 544.6 253.5C545.9 257.5 549.6 262.8 550.7 264.6" fill="none" stroke="#14a868" stroke-width="1.1" stroke-linecap="round" opacity="1"/>
<path d="M580.2 192.2C581.4 191.5 584.8 189.0 587.7 188.0C590.5 187.0 593.9 186.3 597.1 186.1C600.2 185.9 603.5 186.0 606.5 186.6C609.4 187.1 612.4 188.1 614.9 189.4C617.4 190.6 619.9 192.5 621.5 194.1C623.1 195.7 624.6 197.1 624.8 198.8C624.9 200.4 624.2 202.2 622.4 204.0C620.6 205.8 617.0 208.0 614.0 209.6C611.0 211.2 607.2 212.3 604.6 213.4C601.9 214.4 599.1 215.7 598.0 216.2" fill="none" stroke="#14a868" stroke-width="1.2" stroke-linecap="round" opacity="1"/>
<path d="M552.4 222.8C553.6 223.5 556.7 226.3 559.5 227.5C562.2 228.6 565.1 229.3 568.9 229.8C572.6 230.3 577.6 230.9 582.0 230.7C586.4 230.6 590.8 229.3 595.2 228.9C599.6 228.5 605.2 227.7 608.3 228.4C611.5 229.1 612.4 231.2 614.0 233.1C615.6 235.0 616.8 237.8 617.7 239.7C618.7 241.5 619.2 244.3 619.8 244.4C620.4 244.5 621.2 239.7 621.3 240.2C621.4 240.7 621.2 245.2 620.3 247.4C619.4 249.6 616.5 252.4 615.7 253.5" fill="none" stroke="#14a868" stroke-width="1.2" stroke-linecap="round" opacity="1"/>
<path d="M559.5 208.2C559.3 208.7 558.1 210.3 558.5 211.5C559.0 212.6 560.3 214.1 562.3 215.2C564.3 216.3 567.5 217.5 570.8 218.1C574.0 218.6 578.0 218.7 582.0 218.5C586.1 218.4 592.5 217.5 595.2 217.1C597.9 216.7 597.5 216.3 598.0 216.2" fill="none" stroke="#14a868" stroke-width="1.1" stroke-linecap="round" opacity="1"/>
<path d="M560.4 208.7C561.5 208.2 564.3 206.3 567.0 205.8C569.7 205.4 573.3 205.2 576.4 205.8C579.5 206.5 582.8 208.2 585.8 209.6C588.8 211.0 592.8 213.5 594.2 214.3" fill="none" stroke="#0e8c58" stroke-width="0.8" stroke-linecap="round" opacity="1"/>
<path d="M549.1 210.5C549.1 208.8 548.2 203.5 548.7 200.2C549.1 196.9 550.2 193.3 552.0 190.8C553.8 188.3 557.0 185.8 559.5 185.2C562.0 184.5 564.5 185.9 567.0 187.0C569.5 188.1 572.3 190.3 574.5 191.7C576.7 193.1 579.2 194.9 580.2 195.5" fill="none" stroke="#0c4a36" stroke-width="0.7" stroke-linecap="round" opacity="1"/>
<path d="M585.8 194.6C587.0 193.9 591.0 191.7 593.3 190.8C595.7 189.9 598.0 188.9 599.9 189.4C601.8 189.9 603.3 191.7 604.6 193.6C605.8 195.6 607.1 198.8 607.4 201.1C607.7 203.5 607.6 205.8 606.5 207.7C605.4 209.6 602.6 211.5 600.8 212.4C599.1 213.4 596.9 213.2 596.1 213.4" fill="none" stroke="#0c4a36" stroke-width="0.7" stroke-linecap="round" opacity="1"/>
<path d="M595.2 213.4C595.5 212.4 597.1 209.4 597.1 207.7C597.1 206.0 596.1 204.1 595.2 203.0C594.2 201.9 592.1 201.4 591.4 201.1" fill="none" stroke="#14a868" stroke-width="0.9" stroke-linecap="round" opacity="1"/><path d="M490.9 364.1C491.0 365.1 496.6 371.7 499.4 374.1C502.2 376.5 507.9 380.4 512.0 382.2C516.1 383.9 525.2 386.5 530.0 387.1C534.8 387.7 543.3 387.6 548.1 386.7C552.9 385.8 561.5 382.9 566.1 380.4C570.6 377.8 578.9 371.0 582.3 367.7C585.7 364.5 590.0 358.8 591.3 356.0C592.6 353.3 592.8 349.4 592.2 347.0C591.6 344.6 588.5 337.5 586.8 338.0C585.1 338.5 582.4 347.7 579.6 350.6C576.8 353.5 570.3 357.6 566.1 359.6C561.9 361.7 552.9 364.7 548.1 365.9C543.3 367.2 534.8 368.7 530.0 369.1C525.2 369.5 516.2 369.4 512.0 369.1C507.8 368.8 501.3 367.5 498.5 366.8C495.7 366.2 490.7 363.2 490.9 364.1Z" fill="url(#gGoldSide2)" stroke="#f7bc22" stroke-width="1.5" stroke-linejoin="round"/>
<path d="M490.9 364.1C490.7 362.1 495.1 356.3 497.6 353.3C500.1 350.4 503.7 347.6 507.5 344.3C511.3 341.1 518.1 334.5 522.8 331.7C527.6 328.9 533.9 326.9 539.1 325.9C544.2 324.8 551.7 324.3 557.1 325.0C562.5 325.6 570.6 328.0 575.1 329.9C579.5 331.9 586.1 334.9 586.8 338.0C587.5 341.1 582.7 347.4 579.6 350.6C576.5 353.9 570.8 357.3 566.1 359.6C561.4 361.9 553.5 364.5 548.1 365.9C542.7 367.4 535.5 368.6 530.0 369.1C524.6 369.6 516.8 369.4 512.0 369.1C507.3 368.8 501.7 367.6 498.5 366.8C495.3 366.1 491.0 366.2 490.9 364.1Z" fill="#f5b81e" stroke="#f8bf26" stroke-width="1.6" stroke-linejoin="round"/>
<path d="M494.5 363.0C494.4 361.1 498.4 355.8 500.7 353.0C503.0 350.3 506.4 347.7 509.8 344.7C513.3 341.8 519.6 335.7 523.9 333.1C528.3 330.6 534.1 328.7 538.9 327.8C543.6 326.8 550.5 326.4 555.4 326.9C560.4 327.5 567.9 329.7 572.0 331.5C576.1 333.3 582.2 336.1 582.8 338.9C583.4 341.8 579.0 347.6 576.1 350.5C573.3 353.5 568.1 356.7 563.7 358.8C559.4 360.9 552.1 363.3 547.1 364.6C542.2 365.9 535.5 367.1 530.6 367.5C525.6 368.0 518.3 367.8 514.0 367.5C509.6 367.2 504.5 366.1 501.6 365.5C498.6 364.8 494.6 364.8 494.5 363.0Z" fill="none" stroke="#c48a06" stroke-width="0.95"/>
<path d="M498.2 361.8C498.0 360.1 501.7 355.2 503.8 352.7C505.9 350.2 509.0 347.9 512.2 345.2C515.3 342.4 521.1 336.9 525.0 334.6C529.0 332.2 534.3 330.5 538.6 329.6C543.0 328.8 549.2 328.4 553.8 328.9C558.3 329.4 565.2 331.4 568.9 333.1C572.7 334.7 578.2 337.3 578.8 339.9C579.3 342.5 575.3 347.7 572.7 350.5C570.1 353.2 565.3 356.1 561.4 358.0C557.4 360.0 550.8 362.1 546.2 363.3C541.7 364.5 535.6 365.6 531.1 366.0C526.5 366.4 519.9 366.3 515.9 366.0C512.0 365.7 507.3 364.7 504.6 364.1C501.9 363.5 498.3 363.5 498.2 361.8Z" fill="none" stroke="#c48a06" stroke-width="0.95"/>
<clipPath id="gc2"><path d="M500.3 359.6C500.0 358.0 503.5 354.8 505.3 352.9C507.0 351.0 509.0 349.3 512.0 347.0C515.1 344.8 521.2 340.0 525.5 338.0C529.9 336.0 536.1 334.2 540.9 333.5C545.6 332.8 552.6 333.1 557.1 333.5C561.5 333.9 567.7 335.2 570.6 336.2C573.4 337.2 575.7 338.8 576.0 340.3C576.3 341.8 573.9 344.6 572.4 346.1C570.9 347.7 569.1 348.9 566.1 350.6C563.1 352.4 557.2 355.9 552.6 357.8C548.0 359.7 540.2 362.2 535.5 363.2C530.7 364.3 525.2 364.9 521.0 365.0C516.8 365.2 510.6 365.0 507.5 364.1C504.4 363.3 500.7 361.3 500.3 359.6Z"/></clipPath>
<path d="M500.3 359.6C500.0 358.0 503.5 354.8 505.3 352.9C507.0 351.0 509.0 349.3 512.0 347.0C515.1 344.8 521.2 340.0 525.5 338.0C529.9 336.0 536.1 334.2 540.9 333.5C545.6 332.8 552.6 333.1 557.1 333.5C561.5 333.9 567.7 335.2 570.6 336.2C573.4 337.2 575.7 338.8 576.0 340.3C576.3 341.8 573.9 344.6 572.4 346.1C570.9 347.7 569.1 348.9 566.1 350.6C563.1 352.4 557.2 355.9 552.6 357.8C548.0 359.7 540.2 362.2 535.5 363.2C530.7 364.3 525.2 364.9 521.0 365.0C516.8 365.2 510.6 365.0 507.5 364.1C504.4 363.3 500.7 361.3 500.3 359.6Z" fill="#b98c17" stroke="#c48a06" stroke-width="0.8"/>
<g clip-path="url(#gc2)">
<ellipse cx="522.8" cy="356.2" rx="12.5" ry="10" transform="rotate(-20 522.8 356.2)" fill="#8dc3f7"/>
<ellipse cx="554.6" cy="349.2" rx="14" ry="11" transform="rotate(-14 554.6 349.2)" fill="#8dc3f7"/>
</g>
<path d="M523.8 355.2L528.3 355.2L523.8 350.7Z" fill="#8499b8" opacity="0.75" transform="rotate(25 522.8 356.2)"/><path d="M523.8 355.2L528.3 355.2L523.8 350.7Z" fill="#8499b8" opacity="0.75" transform="rotate(115 522.8 356.2)"/><path d="M523.8 355.2L528.3 355.2L523.8 350.7Z" fill="#8499b8" opacity="0.75" transform="rotate(205 522.8 356.2)"/><path d="M523.8 355.2L528.3 355.2L523.8 350.7Z" fill="#8499b8" opacity="0.75" transform="rotate(295 522.8 356.2)"/>
<path d="M555.6 348.2L560.6 348.2L555.6 343.1Z" fill="#8499b8" opacity="0.75" transform="rotate(31 554.6 349.2)"/><path d="M555.6 348.2L560.6 348.2L555.6 343.1Z" fill="#8499b8" opacity="0.75" transform="rotate(121 554.6 349.2)"/><path d="M555.6 348.2L560.6 348.2L555.6 343.1Z" fill="#8499b8" opacity="0.75" transform="rotate(211 554.6 349.2)"/><path d="M555.6 348.2L560.6 348.2L555.6 343.1Z" fill="#8499b8" opacity="0.75" transform="rotate(301 554.6 349.2)"/>
<ellipse cx="509.8" cy="359.5" rx="5" ry="3.9" fill="#ee1418"/>
<path d="M500.8 354.5L502.0 360.3Q507.4 363.9 512.6 359.3L512.6 354.5Z" fill="#4a1878"/>
<ellipse cx="506.6" cy="354.1" rx="6.2" ry="4.7" fill="url(#gPurp)" stroke="#9a3cd2" stroke-width="1"/>
<ellipse cx="506.2" cy="353.1" rx="2.6" ry="1.5" fill="#a65cd6" opacity="0.8"/>
<ellipse cx="538.2" cy="344.6" rx="5" ry="3.9" fill="#ee1418"/>
<path d="M529.2 339.6L530.4 345.4Q535.8 349.0 541.0 344.4L541.0 339.6Z" fill="#4a1878"/>
<ellipse cx="535.0" cy="339.2" rx="6.2" ry="4.7" fill="url(#gPurp)" stroke="#9a3cd2" stroke-width="1"/>
<ellipse cx="534.6" cy="338.2" rx="2.6" ry="1.5" fill="#a65cd6" opacity="0.8"/>
<ellipse cx="539.1" cy="359.0" rx="5" ry="3.9" fill="#ee1418"/>
<path d="M530.1 354.0L531.3 359.8Q536.7 363.4 541.9 358.8L541.9 354.0Z" fill="#4a1878"/>
<ellipse cx="535.9" cy="353.6" rx="6.2" ry="4.7" fill="url(#gPurp)" stroke="#9a3cd2" stroke-width="1"/>
<ellipse cx="535.5" cy="352.6" rx="2.6" ry="1.5" fill="#a65cd6" opacity="0.8"/>
<ellipse cx="571.5" cy="344.6" rx="5" ry="3.9" fill="#ee1418"/>
<path d="M562.5 339.6L563.7 345.4Q569.1 349.0 574.3 344.4L574.3 339.6Z" fill="#4a1878"/>
<ellipse cx="568.3" cy="339.2" rx="6.2" ry="4.7" fill="url(#gPurp)" stroke="#9a3cd2" stroke-width="1"/>
<ellipse cx="567.9" cy="338.2" rx="2.6" ry="1.5" fill="#a65cd6" opacity="0.8"/>
<path d="M481.2 414.7C480.6 413.6 485.4 412.7 487.5 412.5C489.6 412.3 494.2 412.2 496.9 413.1C499.6 414.0 505.1 417.2 507.8 419.1C510.5 420.9 515.6 425.3 517.2 426.9C518.8 428.4 519.5 429.3 519.5 430.8C519.5 432.2 518.1 435.4 517.2 437.8C516.2 440.2 514.2 445.8 512.5 448.8C510.8 451.7 507.2 457.0 504.7 459.7C502.2 462.4 496.5 467.3 493.8 469.1C491.0 470.8 487.1 472.4 484.4 473.0C481.7 473.6 474.1 474.2 473.4 473.4C472.8 472.7 477.4 469.5 479.7 467.5C482.0 465.5 488.1 461.0 490.6 458.1C493.1 455.2 497.0 449.0 498.4 445.6C499.9 442.3 501.4 435.4 501.6 433.1C501.8 430.8 501.2 430.1 500.0 428.4C498.8 426.8 494.7 422.5 492.2 420.6C489.7 418.8 481.9 415.8 481.2 414.7Z" fill="url(#gGoldSide3)" stroke="#f7bc22" stroke-width="1.5" stroke-linejoin="round"/>
<path d="M432.0 457.3C432.6 454.4 435.3 446.8 437.5 442.5C439.7 438.2 443.8 432.0 446.9 428.4C449.9 424.9 454.5 421.2 457.8 419.1C461.1 416.9 465.2 414.7 468.8 414.1C472.3 413.4 477.7 413.7 481.2 414.7C484.8 415.7 489.4 418.6 492.2 420.6C495.0 422.7 498.6 426.6 500.0 428.4C501.4 430.3 501.8 430.5 501.6 433.1C501.3 435.7 500.1 441.9 498.4 445.6C496.8 449.4 493.4 454.8 490.6 458.1C487.8 461.4 483.2 465.2 479.7 467.5C476.2 469.8 471.2 472.7 467.2 473.8C463.2 474.8 457.1 475.2 453.1 474.5C449.1 473.8 443.6 470.9 440.6 469.1C437.7 467.2 434.9 463.8 433.6 462.0C432.3 460.3 431.4 460.3 432.0 457.3Z" fill="#f5b81e" stroke="#f8bf26" stroke-width="1.6" stroke-linejoin="round"/>
<path d="M435.6 456.0C436.1 453.4 438.5 446.6 440.5 442.7C442.5 438.8 446.2 433.2 448.9 430.0C451.7 426.9 455.8 423.5 458.8 421.6C461.7 419.6 465.5 417.7 468.6 417.1C471.8 416.5 476.7 416.8 479.9 417.6C483.0 418.5 487.2 421.1 489.7 423.0C492.3 424.8 495.5 428.3 496.8 430.0C498.0 431.7 498.4 431.9 498.2 434.2C498.0 436.6 496.8 442.1 495.4 445.5C493.9 448.9 490.9 453.8 488.3 456.7C485.8 459.7 481.6 463.1 478.5 465.2C475.3 467.3 470.8 469.9 467.2 470.8C463.6 471.8 458.2 472.1 454.6 471.5C451.0 470.9 446.0 468.3 443.3 466.6C440.7 464.9 438.2 461.8 437.0 460.3C435.8 458.7 435.1 458.7 435.6 456.0Z" fill="none" stroke="#c48a06" stroke-width="0.95"/>
<path d="M439.1 454.7C439.6 452.4 441.7 446.3 443.5 442.9C445.3 439.4 448.6 434.4 451.0 431.6C453.5 428.8 457.1 425.8 459.8 424.1C462.4 422.4 465.7 420.6 468.5 420.1C471.3 419.6 475.7 419.8 478.5 420.6C481.3 421.4 485.0 423.7 487.3 425.4C489.5 427.0 492.4 430.1 493.5 431.6C494.6 433.1 495.0 433.3 494.8 435.4C494.6 437.4 493.6 442.4 492.3 445.4C491.0 448.4 488.3 452.7 486.0 455.4C483.8 458.0 480.1 461.0 477.3 462.9C474.5 464.7 470.5 467.0 467.3 467.9C464.1 468.7 459.2 469.0 456.0 468.5C452.8 467.9 448.4 465.6 446.0 464.1C443.7 462.6 441.4 459.9 440.4 458.5C439.4 457.1 438.7 457.1 439.1 454.7Z" fill="none" stroke="#c48a06" stroke-width="0.95"/>
<clipPath id="gc3"><path d="M439.1 456.6C438.6 452.9 443.0 446.5 445.3 442.5C447.7 438.5 451.6 433.0 454.7 430.0C457.7 427.0 462.1 423.5 465.6 422.2C469.1 420.9 474.6 420.9 478.1 421.4C481.6 421.9 486.4 423.7 489.1 425.3C491.8 427.0 495.6 429.3 496.1 432.3C496.6 435.4 493.9 442.0 492.2 445.6C490.4 449.3 487.2 453.8 484.4 456.6C481.6 459.4 477.0 462.6 473.4 464.4C469.9 466.1 464.7 467.9 460.9 468.3C457.2 468.6 451.7 468.5 448.4 466.7C445.2 465.0 439.5 460.2 439.1 456.6Z"/></clipPath>
<path d="M439.1 456.6C438.6 452.9 443.0 446.5 445.3 442.5C447.7 438.5 451.6 433.0 454.7 430.0C457.7 427.0 462.1 423.5 465.6 422.2C469.1 420.9 474.6 420.9 478.1 421.4C481.6 421.9 486.4 423.7 489.1 425.3C491.8 427.0 495.6 429.3 496.1 432.3C496.6 435.4 493.9 442.0 492.2 445.6C490.4 449.3 487.2 453.8 484.4 456.6C481.6 459.4 477.0 462.6 473.4 464.4C469.9 466.1 464.7 467.9 460.9 468.3C457.2 468.6 451.7 468.5 448.4 466.7C445.2 465.0 439.5 460.2 439.1 456.6Z" fill="#b98c17" stroke="#c48a06" stroke-width="0.8"/>
<g clip-path="url(#gc3)">
<ellipse cx="458.2" cy="453.5" rx="11" ry="13" transform="rotate(28 458.2 453.5)" fill="#8dc3f7"/>
<ellipse cx="481.0" cy="441.0" rx="11" ry="13" transform="rotate(28 481.0 441.0)" fill="#8dc3f7"/>
</g>
<path d="M459.2 452.5L464.2 452.5L459.2 447.4Z" fill="#8499b8" opacity="0.75" transform="rotate(73 458.2 453.5)"/><path d="M459.2 452.5L464.2 452.5L459.2 447.4Z" fill="#8499b8" opacity="0.75" transform="rotate(163 458.2 453.5)"/><path d="M459.2 452.5L464.2 452.5L459.2 447.4Z" fill="#8499b8" opacity="0.75" transform="rotate(253 458.2 453.5)"/><path d="M459.2 452.5L464.2 452.5L459.2 447.4Z" fill="#8499b8" opacity="0.75" transform="rotate(343 458.2 453.5)"/>
<path d="M482.0 440.0L487.1 440.0L482.0 434.9Z" fill="#8499b8" opacity="0.75" transform="rotate(73 481.0 441.0)"/><path d="M482.0 440.0L487.1 440.0L482.0 434.9Z" fill="#8499b8" opacity="0.75" transform="rotate(163 481.0 441.0)"/><path d="M482.0 440.0L487.1 440.0L482.0 434.9Z" fill="#8499b8" opacity="0.75" transform="rotate(253 481.0 441.0)"/><path d="M482.0 440.0L487.1 440.0L482.0 434.9Z" fill="#8499b8" opacity="0.75" transform="rotate(343 481.0 441.0)"/>
<ellipse cx="446.2" cy="458.0" rx="5" ry="3.9" fill="#ee1418"/>
<path d="M437.2 453.0L438.4 458.8Q443.8 462.4 449.0 457.8L449.0 453.0Z" fill="#4a1878"/>
<ellipse cx="443.0" cy="452.6" rx="6.2" ry="4.7" fill="url(#gPurp)" stroke="#9a3cd2" stroke-width="1"/>
<ellipse cx="442.6" cy="451.6" rx="2.6" ry="1.5" fill="#a65cd6" opacity="0.8"/>
<ellipse cx="465.7" cy="440.2" rx="5" ry="3.9" fill="#ee1418"/>
<path d="M456.7 435.2L457.9 441.0Q463.3 444.6 468.5 440.0L468.5 435.2Z" fill="#4a1878"/>
<ellipse cx="462.5" cy="434.8" rx="6.2" ry="4.7" fill="url(#gPurp)" stroke="#9a3cd2" stroke-width="1"/>
<ellipse cx="462.1" cy="433.8" rx="2.6" ry="1.5" fill="#a65cd6" opacity="0.8"/>
<ellipse cx="489.1" cy="439.3" rx="5" ry="3.9" fill="#ee1418"/>
<path d="M480.1 434.3L481.3 440.1Q486.7 443.7 491.9 439.1L491.9 434.3Z" fill="#4a1878"/>
<ellipse cx="485.9" cy="433.9" rx="6.2" ry="4.7" fill="url(#gPurp)" stroke="#9a3cd2" stroke-width="1"/>
<ellipse cx="485.5" cy="432.9" rx="2.6" ry="1.5" fill="#a65cd6" opacity="0.8"/>
<ellipse cx="471.2" cy="457.4" rx="5" ry="3.9" fill="#ee1418"/>
<path d="M462.2 452.4L463.4 458.2Q468.8 461.8 474.0 457.2L474.0 452.4Z" fill="#4a1878"/>
<ellipse cx="468.0" cy="452.0" rx="6.2" ry="4.7" fill="url(#gPurp)" stroke="#9a3cd2" stroke-width="1"/>
<ellipse cx="467.6" cy="451.0" rx="2.6" ry="1.5" fill="#a65cd6" opacity="0.8"/>
<path d="M501.6 432.3C504.6 432.0 516.5 430.7 519.5 430.3" stroke="#f7bc22" stroke-width="1.2"/><path d="M501.2 434.7C504.2 434.4 515.8 433.1 518.8 432.8" stroke="#f7bc22" stroke-width="1.0"/>
<path d="M190.5 690V712.7L167.4 724M190.5 712.7L209 728.2" stroke="#5a5a5a" stroke-width="1.3" fill="none"/>
<g font-family="Liberation Sans,sans-serif" font-size="10.5" fill="#5c5c5c"><text x="193" y="690.5">z</text><text x="167.5" y="726">x</text><text x="210.5" y="729.5">y</text></g>
</g>
</svg>
<div id="vplabel">Perspective</div>
</div>
<div id="right">
<div class="iconrow" style="top:0"><svg class="abs" style="left:0;top:0" width="267" height="26"><use href="#picons"/><use href="#pi_layers" stroke="#1a73f0"/><use href="#pi_circ" stroke="#3a3a3a"/></svg></div>
<div id="lhead"><span class="abs" style="left:3px;top:5px">Name</span><b style="left:134px"></b><b style="left:157px"></b><b style="left:180px"></b><b style="left:203px"></b><b style="left:233px"></b><b style="left:257px"></b><span class="abs" style="left:259px;top:5px">L</span></div>
<div id="llist">
<div class="lr" style="top:1px"><span class="nm">Lights</span><span class="rd"></span><svg class="abs" style="left:160px;top:0" width="20" height="17"><use href="#bulb"/></svg><svg class="abs" style="left:182px;top:0" width="20" height="17"><use href="#lock"/></svg><span class="sw" style="background:#ffffff"></span><svg class="abs" style="left:238px;top:2px" width="13" height="13"><circle cx="6.5" cy="6.5" r="5.6" fill="url(#ball0)"/></svg><svg class="abs" style="left:262px;top:2px" width="13" height="13"><circle cx="6.5" cy="6.5" r="5.6" fill="url(#ball0)"/></svg></div>
<div class="lr" style="top:18px"><span class="nm">Metal 01</span><span class="rd on"></span><svg class="abs" style="left:160px;top:0;opacity:.32" width="20" height="17"><use href="#bulb"/></svg><svg class="abs" style="left:182px;top:0;opacity:.32" width="20" height="17"><use href="#lock"/></svg><span class="sw" style="background:#199770"></span><svg class="abs" style="left:238px;top:2px" width="13" height="13"><circle cx="6.5" cy="6.5" r="5.6" fill="url(#ball0)"/></svg><svg class="abs" style="left:262px;top:2px" width="13" height="13"><circle cx="6.5" cy="6.5" r="5.6" fill="url(#ball0)"/></svg></div>
<div class="lr" style="top:35px"><span class="nm">Metal 02</span><span class="rd"></span><svg class="abs" style="left:160px;top:0" width="20" height="17"><use href="#bulb"/></svg><svg class="abs" style="left:182px;top:0" width="20" height="17"><use href="#lock"/></svg><span class="sw" style="background:#50c27a"></span><svg class="abs" style="left:238px;top:2px" width="13" height="13"><circle cx="6.5" cy="6.5" r="5.6" fill="url(#ball0)"/></svg><svg class="abs" style="left:262px;top:2px" width="13" height="13"><circle cx="6.5" cy="6.5" r="5.6" fill="url(#ball0)"/></svg></div>
<div class="lr" style="top:52px"><span class="nm">Metal 03</span><span class="rd"></span><svg class="abs" style="left:160px;top:0" width="20" height="17"><use href="#bulb"/></svg><svg class="abs" style="left:182px;top:0" width="20" height="17"><use href="#lock"/></svg><span class="sw" style="background:#8ef08c"></span><svg class="abs" style="left:238px;top:2px" width="13" height="13"><circle cx="6.5" cy="6.5" r="5.6" fill="url(#ball0)"/></svg><svg class="abs" style="left:262px;top:2px" width="13" height="13"><circle cx="6.5" cy="6.5" r="5.6" fill="url(#ball0)"/></svg></div>
<div class="lr" style="top:69px"><span class="nm">Metal 04</span><span class="rd"></span><svg class="abs" style="left:160px;top:0" width="20" height="17"><use href="#bulb"/></svg><svg class="abs" style="left:182px;top:0" width="20" height="17"><use href="#lock"/></svg><span class="sw" style="background:#d3f8d1"></span><svg class="abs" style="left:238px;top:2px" width="13" height="13"><circle cx="6.5" cy="6.5" r="5.6" fill="url(#ball0)"/></svg><svg class="abs" style="left:262px;top:2px" width="13" height="13"><circle cx="6.5" cy="6.5" r="5.6" fill="url(#ball0)"/></svg></div>
<div class="lr" style="top:86px"><span class="nm">User Layer 01</span><span class="rd"></span><svg class="abs" style="left:160px;top:0" width="20" height="17"><use href="#bulb"/></svg><svg class="abs" style="left:182px;top:0" width="20" height="17"><use href="#lock"/></svg><span class="sw" style="background:#ff2d1e"></span><svg class="abs" style="left:238px;top:2px" width="13" height="13"><circle cx="6.5" cy="6.5" r="5.6" fill="url(#ball0)"/></svg><svg class="abs" style="left:262px;top:2px" width="13" height="13"><circle cx="6.5" cy="6.5" r="5.6" fill="url(#ball0)"/></svg></div>
<div class="lr" style="top:103px"><span class="nm">User Layer 02</span><span class="rd"></span><svg class="abs" style="left:160px;top:0" width="20" height="17"><use href="#bulb"/></svg><svg class="abs" style="left:182px;top:0" width="20" height="17"><use href="#lock"/></svg><span class="sw" style="background:#00f03c"></span><svg class="abs" style="left:238px;top:2px" width="13" height="13"><circle cx="6.5" cy="6.5" r="5.6" fill="url(#ball0)"/></svg><svg class="abs" style="left:262px;top:2px" width="13" height="13"><circle cx="6.5" cy="6.5" r="5.6" fill="url(#ball0)"/></svg></div>
<div class="lr" style="top:120px"><span class="nm">User Layer 03</span><span class="rd"></span><svg class="abs" style="left:160px;top:0" width="20" height="17"><use href="#bulb"/></svg><svg class="abs" style="left:182px;top:0" width="20" height="17"><use href="#lock"/></svg><span class="sw" style="background:#1f45ff"></span><svg class="abs" style="left:238px;top:2px" width="13" height="13"><circle cx="6.5" cy="6.5" r="5.6" fill="url(#ball0)"/></svg><svg class="abs" style="left:262px;top:2px" width="13" height="13"><circle cx="6.5" cy="6.5" r="5.6" fill="url(#ball0)"/></svg></div>
<div class="lr" style="top:137px"><span class="nm">User Layer 04</span><span class="rd"></span><svg class="abs" style="left:160px;top:0" width="20" height="17"><use href="#bulb"/></svg><svg class="abs" style="left:182px;top:0" width="20" height="17"><use href="#lock"/></svg><span class="sw" style="background:#9b9b9b"></span><svg class="abs" style="left:238px;top:2px" width="13" height="13"><circle cx="6.5" cy="6.5" r="5.6" fill="url(#ball0)"/></svg><svg class="abs" style="left:262px;top:2px" width="13" height="13"><circle cx="6.5" cy="6.5" r="5.6" fill="url(#ball0)"/></svg></div>
<div class="lr" style="top:154px"><span class="nm">Gem 01</span><span class="rd"></span><svg class="abs" style="left:160px;top:0" width="20" height="17"><use href="#bulb"/></svg><svg class="abs" style="left:182px;top:0" width="20" height="17"><use href="#lock"/></svg><span class="sw" style="background:#0c5ab4"></span><svg class="abs" style="left:238px;top:2px" width="13" height="13"><circle cx="6.5" cy="6.5" r="5.6" fill="url(#ball0)"/></svg><svg class="abs" style="left:262px;top:2px" width="13" height="13"><circle cx="6.5" cy="6.5" r="5.6" fill="url(#ball0)"/></svg></div>
<div class="lr" style="top:171px"><span class="nm">Gem 02</span><span class="rd"></span><svg class="abs" style="left:160px;top:0" width="20" height="17"><use href="#bulb"/></svg><svg class="abs" style="left:182px;top:0" width="20" height="17"><use href="#lock"/></svg><span class="sw" style="background:#4b90e0"></span><svg class="abs" style="left:238px;top:2px" width="13" height="13"><circle cx="6.5" cy="6.5" r="5.6" fill="url(#ball0)"/></svg><svg class="abs" style="left:262px;top:2px" width="13" height="13"><circle cx="6.5" cy="6.5" r="5.6" fill="url(#ball0)"/></svg></div>
<div class="lr" style="top:188px"><span class="nm">Gem 03</span><span class="rd"></span><svg class="abs" style="left:160px;top:0" width="20" height="17"><use href="#bulb"/></svg><svg class="abs" style="left:182px;top:0" width="20" height="17"><use href="#lock"/></svg><span class="sw" style="background:#8fc5fb"></span><svg class="abs" style="left:238px;top:2px" width="13" height="13"><circle cx="6.5" cy="6.5" r="5.6" fill="url(#ball0)"/></svg><svg class="abs" style="left:262px;top:2px" width="13" height="13"><circle cx="6.5" cy="6.5" r="5.6" fill="url(#ball0)"/></svg></div>
<div class="lr" style="top:205px"><span class="nm">Gem 04</span><span class="rd"></span><svg class="abs" style="left:160px;top:0" width="20" height="17"><use href="#bulb"/></svg><svg class="abs" style="left:182px;top:0" width="20" height="17"><use href="#lock"/></svg><span class="sw" style="background:#c5dffc"></span><svg class="abs" style="left:238px;top:2px" width="13" height="13"><circle cx="6.5" cy="6.5" r="5.6" fill="url(#ball0)"/></svg><svg class="abs" style="left:262px;top:2px" width="13" height="13"><circle cx="6.5" cy="6.5" r="5.6" fill="url(#ball0)"/></svg></div>
<div class="lr" style="top:222px"><span class="nm">Heads</span><span class="rd"></span><svg class="abs" style="left:160px;top:0" width="20" height="17"><use href="#bulb"/></svg><svg class="abs" style="left:182px;top:0" width="20" height="17"><use href="#lock"/></svg><span class="sw" style="background:#8f38c9"></span><svg class="abs" style="left:238px;top:2px" width="13" height="13"><circle cx="6.5" cy="6.5" r="5.6" fill="url(#ball0)"/></svg><svg class="abs" style="left:262px;top:2px" width="13" height="13"><circle cx="6.5" cy="6.5" r="5.6" fill="url(#ball0)"/></svg></div>
<div class="lr" style="top:239px"><span class="nm">Finger Sizes</span><span class="rd"></span><svg class="abs" style="left:160px;top:0" width="20" height="17"><use href="#bulb"/></svg><svg class="abs" style="left:182px;top:0" width="20" height="17"><use href="#lock"/></svg><span class="sw" style="background:#c2504e"></span><svg class="abs" style="left:238px;top:2px" width="13" height="13"><circle cx="6.5" cy="6.5" r="5.6" fill="url(#ball1)"/></svg><svg class="abs" style="left:262px;top:2px" width="13" height="13"><circle cx="6.5" cy="6.5" r="5.6" fill="url(#ball0)"/></svg></div>
<div class="lr" style="top:256px"><span class="nm">Cutting Objects</span><span class="rd"></span><svg class="abs" style="left:160px;top:0" width="20" height="17"><use href="#bulb"/></svg><svg class="abs" style="left:182px;top:0" width="20" height="17"><use href="#lock"/></svg><span class="sw" style="background:#ff8c1e"></span><svg class="abs" style="left:238px;top:2px" width="13" height="13"><circle cx="6.5" cy="6.5" r="5.6" fill="url(#ball2)"/></svg><svg class="abs" style="left:262px;top:2px" width="13" height="13"><circle cx="6.5" cy="6.5" r="5.6" fill="url(#ball0)"/></svg></div>
<div class="lr" style="top:273px"><span class="nm">Creation Curves</span><span class="rd"></span><svg class="abs" style="left:160px;top:0" width="20" height="17"><use href="#bulb"/></svg><svg class="abs" style="left:182px;top:0" width="20" height="17"><use href="#lock"/></svg><span class="sw" style="background:#ffc935"></span><svg class="abs" style="left:238px;top:2px" width="13" height="13"><circle cx="6.5" cy="6.5" r="5.6" fill="url(#ball3)"/></svg><svg class="abs" style="left:262px;top:2px" width="13" height="13"><circle cx="6.5" cy="6.5" r="5.6" fill="url(#ball0)"/></svg></div>
<div class="lr" style="top:290px"><span class="nm">User Layer 17</span><span class="rd"></span><svg class="abs" style="left:160px;top:0" width="20" height="17"><use href="#bulb"/></svg><svg class="abs" style="left:182px;top:0" width="20" height="17"><use href="#lock"/></svg><span class="sw" style="background:#ff9c9c"></span><svg class="abs" style="left:238px;top:2px" width="13" height="13"><circle cx="6.5" cy="6.5" r="5.6" fill="url(#ball0)"/></svg><svg class="abs" style="left:262px;top:2px" width="13" height="13"><circle cx="6.5" cy="6.5" r="5.6" fill="url(#ball0)"/></svg></div>
<div class="lr" style="top:307px"><span class="nm">User Layer 18</span><span class="rd"></span><svg class="abs" style="left:160px;top:0" width="20" height="17"><use href="#bulb"/></svg><svg class="abs" style="left:182px;top:0" width="20" height="17"><use href="#lock"/></svg><span class="sw" style="background:#f5bd85"></span><svg class="abs" style="left:238px;top:2px" width="13" height="13"><circle cx="6.5" cy="6.5" r="5.6" fill="url(#ball0)"/></svg><svg class="abs" style="left:262px;top:2px" width="13" height="13"><circle cx="6.5" cy="6.5" r="5.6" fill="url(#ball0)"/></svg></div>
<div class="lr" style="top:324px"><span class="nm">User Layer 19</span><span class="rd"></span><svg class="abs" style="left:160px;top:0" width="20" height="17"><use href="#bulb"/></svg><svg class="abs" style="left:182px;top:0" width="20" height="17"><use href="#lock"/></svg><span class="sw" style="background:#f7d78f"></span><svg class="abs" style="left:238px;top:2px" width="13" height="13"><circle cx="6.5" cy="6.5" r="5.6" fill="url(#ball0)"/></svg><svg class="abs" style="left:262px;top:2px" width="13" height="13"><circle cx="6.5" cy="6.5" r="5.6" fill="url(#ball0)"/></svg></div>
<div class="lr" style="top:341px"><span class="nm">User Layer 20</span><span class="rd"></span><svg class="abs" style="left:160px;top:0" width="20" height="17"><use href="#bulb"/></svg><svg class="abs" style="left:182px;top:0" width="20" height="17"><use href="#lock"/></svg><span class="sw" style="background:#d3dd70"></span><svg class="abs" style="left:238px;top:2px" width="13" height="13"><circle cx="6.5" cy="6.5" r="5.6" fill="url(#ball0)"/></svg><svg class="abs" style="left:262px;top:2px" width="13" height="13"><circle cx="6.5" cy="6.5" r="5.6" fill="url(#ball0)"/></svg></div>
</div>
<div id="lfoot">
<div class="btn" style="left:18px;width:46px"><svg class="abs" style="left:0;top:0" width="46" height="17"><path d="M7 8.5H17M12 3.5V13.5" stroke="#3c3c3c" stroke-width="1.1"/><path d="M23 1V16" stroke="#dadada" stroke-width="1"/><path d="M29 8.5H39" stroke="#b8b8b8" stroke-width="1.1"/></svg></div>
<div class="btn" style="left:81px;width:35px"><svg class="abs" style="left:0;top:0" width="35" height="17"><use href="#gear"/><path d="M24.5 7L27.2 9.8L30 7" stroke="#333" stroke-width="1.1" fill="none"/></svg></div>
</div>
<div id="rdiv"></div>
<div class="iconrow" style="top:440px"><svg class="abs" style="left:0;top:0" width="267" height="26"><use href="#picons"/><use href="#pi_layers" stroke="#3a3a3a"/><use href="#pi_circ" stroke="#1a73f0"/></svg></div>
<div id="nosel">No Selection</div>
</div>
<div id="status">
<svg class="abs" style="left:4.5px;top:8px" width="16" height="14"><path d="M0 1.2H14.5M0 4.6H14.5M0 8H14.5M0 11.4H14.5" stroke="#7d7d7d" stroke-width="1.1"/></svg>
<span style="left:769px">Millimeters</span>
<div id="cplane"><span style="left:6px;top:1px;letter-spacing:-0.35px">CPlane</span><svg class="abs" style="left:53px;top:1.5px" width="12" height="12"><path d="M3 5L6 2L9 5M3 8L6 11L9 8" stroke="#555" stroke-width="1.1" fill="none"/></svg></div>
<span style="left:927px">X: 4.438</span><span style="left:1009px">Y: 1.214</span><span style="left:1094px">Z: 0.000</span>
</div>
</body></html>
